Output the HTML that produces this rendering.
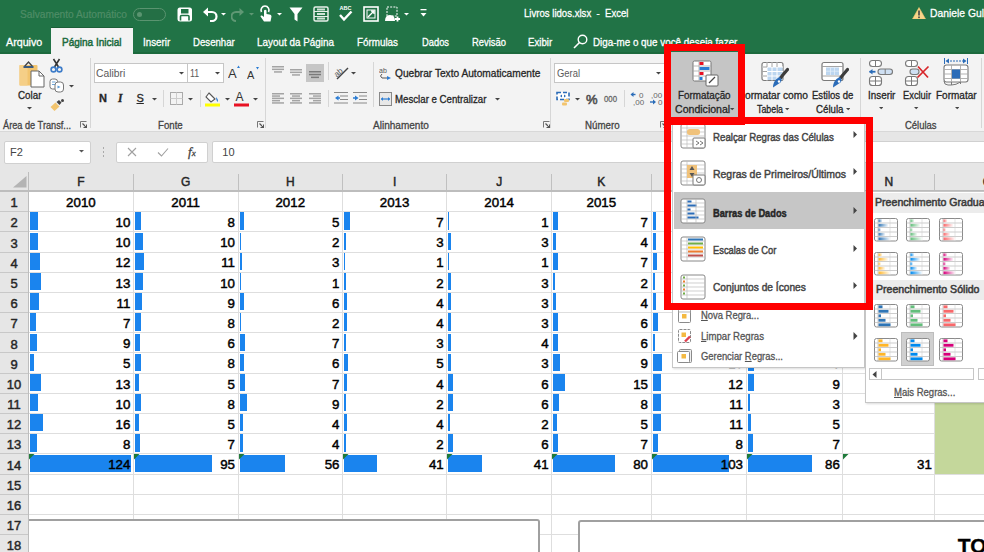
<!DOCTYPE html>
<html><head><meta charset="utf-8"><style>
html,body{margin:0;padding:0;}
body{width:984px;height:552px;overflow:hidden;position:relative;background:#fff;font-family:"Liberation Sans", sans-serif;}
div{-webkit-text-stroke:0.3px currentColor;}
</style></head><body>
<div style="position:absolute;left:0px;top:0px;width:984px;height:53.5px;background:#217346"></div>
<div style="position:absolute;left:0px;top:51.5px;width:984px;height:2px;background:#1c6a3d"></div>
<div style="position:absolute;left:20px;top:8.40px;font-size:11px;line-height:13.20px;color:#4f8d66;font-weight:normal;white-space:nowrap;transform:scaleX(0.9258);transform-origin:0 0;-webkit-text-stroke:0.2px currentColor"><span id="t1">Salvamento Automático</span></div>
<div style="position:absolute;left:132.5px;top:7.5px;width:33px;height:13.5px;border:1.3px solid #5a9470;border-radius:7px;box-sizing:border-box;background:#246f45"></div>
<div style="position:absolute;left:136.5px;top:11.8px;width:5px;height:5px;background:#5a9470;border-radius:50%"></div>
<svg style="position:absolute;left:177px;top:7px;" width="16" height="15" viewBox="0 0 16 15"><rect x="0.5" y="0.5" width="14.5" height="14" rx="2.5" fill="#fff"/><rect x="4" y="2" width="7.5" height="4.5" fill="#217346"/><path d="M3.5 13.5 V9.5 Q3.5 8.5 4.5 8.5 H11 Q12 8.5 12 9.5 V13.5" fill="none" stroke="#217346" stroke-width="1.6"/></svg>
<svg style="position:absolute;left:202px;top:6px;" width="16" height="16" viewBox="0 0 16 16"><path d="M3 6 H10 A4.5 4.5 0 0 1 10 15 H8" fill="none" stroke="#fff" stroke-width="2.2"/><path d="M1 6 L6 1.5 L6 10.5 Z" fill="#fff"/></svg>
<svg style="position:absolute;left:220.5px;top:12.75px;" width="5.0" height="3.5" viewBox="0 0 5.0 3.5"><path d="M0 0 L5.0 0 L2.5 2.5 Z" fill="#fff"/></svg>
<svg style="position:absolute;left:231px;top:6px;" width="14" height="16" viewBox="0 0 14 16"><path d="M11 6 H5 A4.5 4.5 0 0 0 5 15" fill="none" stroke="#5f9874" stroke-width="2"/><path d="M13 6 L8.5 2 L8.5 10 Z" fill="#5f9874"/></svg>
<svg style="position:absolute;left:248.5px;top:12.75px;" width="5.0" height="3.5" viewBox="0 0 5.0 3.5"><path d="M0 0 L5.0 0 L2.5 2.5 Z" fill="#5f9874"/></svg>
<svg style="position:absolute;left:258px;top:5px;" width="15" height="18" viewBox="0 0 15 18"><path d="M3.5 7 A4 4 0 1 1 10.5 7" fill="none" stroke="#fff" stroke-width="1.6"/><path d="M6 5.5 V12 L4 10.5 Q2.5 10 2.5 11.5 L6 16.5 H12.5 L13.5 11.5 Q13.5 9.5 11.5 9.5 L8.5 9 V5.5 Q7.25 4 6 5.5 Z" fill="#fff"/></svg>
<svg style="position:absolute;left:277.0px;top:12.75px;" width="5.0" height="3.5" viewBox="0 0 5.0 3.5"><path d="M0 0 L5.0 0 L2.5 2.5 Z" fill="#fff"/></svg>
<svg style="position:absolute;left:289px;top:7px;" width="14" height="15" viewBox="0 0 14 15"><path d="M0.5 0.5 H13.5 L8.5 7 V14.5 L5.5 12.5 V7 Z" fill="#fff"/></svg>
<svg style="position:absolute;left:313px;top:6px;" width="16" height="16" viewBox="0 0 16 16"><rect x="1" y="1" width="14" height="14" rx="1.5" fill="none" stroke="#e8f0ea" stroke-width="1.5"/><path d="M1 5.5 H15 M1 10.5 H15" stroke="#e8f0ea" stroke-width="1.2"/><rect x="4" y="2.5" width="8" height="2" fill="#cfe3d6"/><rect x="4" y="7" width="8" height="2" fill="#cfe3d6"/><rect x="4" y="11.5" width="8" height="2" fill="#cfe3d6"/></svg>
<svg style="position:absolute;left:338px;top:4px;" width="15" height="18" viewBox="0 0 15 18"><text x="7.5" y="6" font-size="5.5" font-family="Liberation Sans" font-weight="bold" fill="#fff" text-anchor="middle">ABC</text><path d="M2 11 L6 15.5 L13.5 7.5" fill="none" stroke="#fff" stroke-width="2.4"/></svg>
<svg style="position:absolute;left:363px;top:6px;" width="16" height="16" viewBox="0 0 16 16"><rect x="1" y="1" width="14" height="14" fill="none" stroke="#fff" stroke-width="1.6"/><rect x="4" y="4" width="8" height="8" fill="none" stroke="#fff" stroke-width="1"/><path d="M5 11 L11 5 M8 5 H11 V8" stroke="#fff" stroke-width="1.4" fill="none"/></svg>
<svg style="position:absolute;left:384px;top:6px;" width="16" height="17" viewBox="0 0 16 17"><rect x="3" y="1" width="10" height="9" fill="none" stroke="#fff" stroke-width="1" stroke-dasharray="2 1.2"/><path d="M1 15 Q1 9 6 9 Q11 9 11 15 Z" fill="#fff"/><path d="M11 13 H16 M13.5 10.5 V15.5" stroke="#fff" stroke-width="1.8"/></svg>
<svg style="position:absolute;left:404.0px;top:12.75px;" width="5.0" height="3.5" viewBox="0 0 5.0 3.5"><path d="M0 0 L5.0 0 L2.5 2.5 Z" fill="#fff"/></svg>
<svg style="position:absolute;left:420px;top:9px;" width="7" height="9" viewBox="0 0 7 9"><rect x="0.5" y="0" width="6" height="1.3" fill="#fff"/><path d="M0.5 4 L6.5 4 L3.5 7.5 Z" fill="#fff"/></svg>
<div style="position:absolute;left:523.5px;top:6.90px;font-size:11px;line-height:13.20px;color:#ffffff;font-weight:normal;white-space:nowrap;transform:scaleX(0.8722);transform-origin:0 0;"><span id="t2">Livros lidos.xlsx&nbsp; - &nbsp;Excel</span></div>
<svg style="position:absolute;left:912px;top:6.5px;" width="14" height="12.5" viewBox="0 0 14 12.5"><path d="M7 0.5 L13.5 12 H0.5 Z" fill="#f7d58a" stroke="#f4c66b" stroke-width="0.6"/><rect x="6.2" y="3.5" width="1.6" height="5" fill="#444"/><rect x="6.2" y="9.5" width="1.6" height="1.6" fill="#444"/></svg>
<div style="position:absolute;left:930px;top:7.10px;font-size:11.5px;line-height:13.80px;color:#ffffff;font-weight:normal;white-space:nowrap;transform:scaleX(0.8979);transform-origin:0 0;"><span id="t3">Daniele Gullo</span></div>
<div style="position:absolute;left:50.5px;top:27px;width:82px;height:1.5px;background:#1a5f37"></div>
<div style="position:absolute;left:50.5px;top:28.3px;width:82px;height:25.5px;background:#f3f3f3"></div>
<div style="position:absolute;left:6.4px;top:35.80px;font-size:11px;line-height:13.20px;color:#ffffff;font-weight:normal;white-space:nowrap;transform:scaleX(0.9733);transform-origin:0 0;"><span id="t4">Arquivo</span></div>
<div style="position:absolute;left:62px;top:35.80px;font-size:11px;line-height:13.20px;color:#1c6b3e;font-weight:normal;white-space:nowrap;transform:scaleX(0.9108);transform-origin:0 0;-webkit-text-stroke:0.5px currentColor"><span id="t5">Página Inicial</span></div>
<div style="position:absolute;left:143px;top:35.80px;font-size:11px;line-height:13.20px;color:#ffffff;font-weight:normal;white-space:nowrap;transform:scaleX(0.8933);transform-origin:0 0;"><span id="t6">Inserir</span></div>
<div style="position:absolute;left:193.2px;top:35.80px;font-size:11px;line-height:13.20px;color:#ffffff;font-weight:normal;white-space:nowrap;transform:scaleX(0.8763);transform-origin:0 0;"><span id="t7">Desenhar</span></div>
<div style="position:absolute;left:257px;top:35.80px;font-size:11px;line-height:13.20px;color:#ffffff;font-weight:normal;white-space:nowrap;transform:scaleX(0.8991);transform-origin:0 0;"><span id="t8">Layout da Página</span></div>
<div style="position:absolute;left:357px;top:35.80px;font-size:11px;line-height:13.20px;color:#ffffff;font-weight:normal;white-space:nowrap;transform:scaleX(0.8943);transform-origin:0 0;"><span id="t9">Fórmulas</span></div>
<div style="position:absolute;left:421.7px;top:35.80px;font-size:11px;line-height:13.20px;color:#ffffff;font-weight:normal;white-space:nowrap;transform:scaleX(0.8491);transform-origin:0 0;"><span id="t10">Dados</span></div>
<div style="position:absolute;left:471.8px;top:35.80px;font-size:11px;line-height:13.20px;color:#ffffff;font-weight:normal;white-space:nowrap;transform:scaleX(0.8528);transform-origin:0 0;"><span id="t11">Revisão</span></div>
<div style="position:absolute;left:527.8px;top:35.80px;font-size:11px;line-height:13.20px;color:#ffffff;font-weight:normal;white-space:nowrap;transform:scaleX(0.8795);transform-origin:0 0;"><span id="t12">Exibir</span></div>
<svg style="position:absolute;left:573px;top:34px;" width="15" height="15" viewBox="0 0 15 15"><circle cx="9.5" cy="5.5" r="4.3" fill="none" stroke="#fff" stroke-width="1.4"/><path d="M6.5 8.5 L1 14" stroke="#fff" stroke-width="1.6"/></svg>
<div style="position:absolute;left:592.8px;top:35.80px;font-size:11px;line-height:13.20px;color:#ffffff;font-weight:normal;white-space:nowrap;transform:scaleX(0.8945);transform-origin:0 0;"><span id="t13">Diga-me o que você deseja fazer</span></div>
<div style="position:absolute;left:0px;top:53.5px;width:984px;height:77px;background:#f3f3f3"></div>
<div style="position:absolute;left:0px;top:130.5px;width:984px;height:1.5px;background:#d8d8d8"></div>
<div style="position:absolute;left:90.2px;top:58px;width:1px;height:70px;background:#d6d6d6"></div>
<div style="position:absolute;left:264.5px;top:58px;width:1px;height:70px;background:#d6d6d6"></div>
<div style="position:absolute;left:549.7px;top:58px;width:1px;height:70px;background:#d6d6d6"></div>
<div style="position:absolute;left:860.3px;top:58px;width:1px;height:70px;background:#d6d6d6"></div>
<div style="position:absolute;left:981.3px;top:58px;width:1px;height:70px;background:#d6d6d6"></div>
<div style="position:absolute;left:3px;top:118.70px;font-size:10.5px;line-height:12.60px;color:#444444;font-weight:normal;white-space:nowrap;transform:scaleX(0.8760);transform-origin:0 0;"><span id="t14">Área de Transf...</span></div>
<div style="position:absolute;left:158.4px;top:118.70px;font-size:10.5px;line-height:12.60px;color:#444444;font-weight:normal;white-space:nowrap;transform:scaleX(0.9196);transform-origin:0 0;"><span id="t15">Fonte</span></div>
<div style="position:absolute;left:372.7px;top:118.70px;font-size:10.5px;line-height:12.60px;color:#444444;font-weight:normal;white-space:nowrap;transform:scaleX(0.9559);transform-origin:0 0;"><span id="t16">Alinhamento</span></div>
<div style="position:absolute;left:585.4px;top:118.70px;font-size:10.5px;line-height:12.60px;color:#444444;font-weight:normal;white-space:nowrap;transform:scaleX(0.9261);transform-origin:0 0;"><span id="t17">Número</span></div>
<div style="position:absolute;left:905.4px;top:118.70px;font-size:10.5px;line-height:12.60px;color:#444444;font-weight:normal;white-space:nowrap;transform:scaleX(0.9021);transform-origin:0 0;"><span id="t18">Células</span></div>
<svg style="position:absolute;left:80px;top:121px;" width="7" height="7" viewBox="0 0 7 7"><path d="M0.5 6.5 V0.5 H6.5" fill="none" stroke="#777" stroke-width="1"/><path d="M2.5 2.5 L6.5 6.5 M6.5 3.5 V6.5 H3.5" fill="none" stroke="#555" stroke-width="1.2"/></svg>
<svg style="position:absolute;left:257px;top:121px;" width="7" height="7" viewBox="0 0 7 7"><path d="M0.5 6.5 V0.5 H6.5" fill="none" stroke="#777" stroke-width="1"/><path d="M2.5 2.5 L6.5 6.5 M6.5 3.5 V6.5 H3.5" fill="none" stroke="#555" stroke-width="1.2"/></svg>
<svg style="position:absolute;left:543px;top:121px;" width="7" height="7" viewBox="0 0 7 7"><path d="M0.5 6.5 V0.5 H6.5" fill="none" stroke="#777" stroke-width="1"/><path d="M2.5 2.5 L6.5 6.5 M6.5 3.5 V6.5 H3.5" fill="none" stroke="#555" stroke-width="1.2"/></svg>
<svg style="position:absolute;left:660px;top:121px;" width="7" height="7" viewBox="0 0 7 7"><path d="M0.5 6.5 V0.5 H6.5" fill="none" stroke="#777" stroke-width="1"/><path d="M2.5 2.5 L6.5 6.5 M6.5 3.5 V6.5 H3.5" fill="none" stroke="#555" stroke-width="1.2"/></svg>
<svg style="position:absolute;left:19px;top:59.5px;" width="27" height="28" viewBox="0 0 27 28"><rect x="0.5" y="5" width="18" height="20.5" rx="1" fill="#f2c46e"/><rect x="0.5" y="5" width="8" height="20.5" fill="#f5cf87"/><path d="M5.5 6.5 L9.5 2 L13.5 6.5" fill="none" stroke="#444" stroke-width="1.3"/><rect x="4.5" y="6" width="10" height="2" fill="#3a5a80"/><path d="M12 11 H20 L25 16 V27 H12 Z" fill="#fff" stroke="#666" stroke-width="1"/><path d="M20 11 V16 H25" fill="none" stroke="#666" stroke-width="1"/></svg>
<div style="position:absolute;left:18px;top:89.00px;font-size:11px;line-height:13.20px;color:#262626;font-weight:normal;white-space:nowrap;transform:scaleX(0.8898);transform-origin:0 0;"><span id="t19">Colar</span></div>
<svg style="position:absolute;left:27.0px;top:106.75px;" width="5.0" height="3.5" viewBox="0 0 5.0 3.5"><path d="M0 0 L5.0 0 L2.5 2.5 Z" fill="#444"/></svg>
<svg style="position:absolute;left:49px;top:58px;" width="15" height="15" viewBox="0 0 15 15"><path d="M4.5 1 L9.5 9 M10.5 1 L5.5 9" stroke="#333" stroke-width="1.6"/><circle cx="4.5" cy="11.5" r="2.4" fill="none" stroke="#3d7cc9" stroke-width="1.6"/><circle cx="10.5" cy="11.5" r="2.4" fill="none" stroke="#3d7cc9" stroke-width="1.6"/></svg>
<svg style="position:absolute;left:49px;top:78px;" width="16" height="15" viewBox="0 0 16 15"><rect x="1" y="1" width="7.5" height="10" rx="2.5" fill="#fff" stroke="#777" stroke-width="1"/><path d="M3 4 H6.5 M3 6.5 H6.5" stroke="#5b9bd5" stroke-width="0.9"/><rect x="6" y="4" width="8.5" height="10" rx="3" fill="#fff" stroke="#777" stroke-width="1"/><path d="M8.5 7.5 L11.5 9 L8.5 10.5" fill="#5b9bd5"/></svg>
<svg style="position:absolute;left:68.5px;top:84.75px;" width="5.0" height="3.5" viewBox="0 0 5.0 3.5"><path d="M0 0 L5.0 0 L2.5 2.5 Z" fill="#444"/></svg>
<svg style="position:absolute;left:50px;top:98px;" width="15" height="14" viewBox="0 0 15 14"><path d="M0.5 9 L5.5 4.5 L9.5 8.5 L4.5 13 Z" fill="#f2c46e"/><path d="M6.5 4 L9 2 L11.5 4.5 L9.5 7 Z" fill="#444"/><circle cx="12.5" cy="2.5" r="1.5" fill="#444"/></svg>
<div style="position:absolute;left:94.4px;top:63.2px;width:93.3px;height:19.6px;background:#fff;border:1px solid #c6c6c6;box-sizing:border-box"></div>
<div style="position:absolute;left:187.2px;top:63.2px;width:36.5px;height:19.6px;background:#fff;border:1px solid #c6c6c6;box-sizing:border-box"></div>
<div style="position:absolute;left:96.2px;top:66.70px;font-size:10.5px;line-height:12.60px;color:#5a5a5a;font-weight:normal;white-space:nowrap;transform:scaleX(0.9844);transform-origin:0 0;-webkit-text-stroke:0"><span id="t20">Calibri</span></div>
<div style="position:absolute;left:190.4px;top:66.70px;font-size:10.5px;line-height:12.60px;color:#5a5a5a;font-weight:normal;white-space:nowrap;transform:scaleX(0.8436);transform-origin:0 0;-webkit-text-stroke:0"><span id="t21">11</span></div>
<svg style="position:absolute;left:178.8px;top:71.75px;" width="5.0" height="3.5" viewBox="0 0 5.0 3.5"><path d="M0 0 L5.0 0 L2.5 2.5 Z" fill="#444"/></svg>
<svg style="position:absolute;left:215.0px;top:71.75px;" width="5.0" height="3.5" viewBox="0 0 5.0 3.5"><path d="M0 0 L5.0 0 L2.5 2.5 Z" fill="#444"/></svg>
<svg style="position:absolute;left:228px;top:64px;" width="13" height="16" viewBox="0 0 13 16"><text x="0" y="14" font-size="13" font-family="Liberation Sans" fill="#333">A</text><path d="M9 4 L10.5 1.5 L12 4 Z" fill="#2b7cd3"/></svg>
<svg style="position:absolute;left:246.5px;top:66px;" width="13" height="14" viewBox="0 0 13 14"><text x="0" y="12.5" font-size="11" font-family="Liberation Sans" fill="#333">A</text><path d="M9 1 L10.5 3.5 L12 1 Z" fill="#2b7cd3"/></svg>
<div style="position:absolute;left:99px;top:92.40px;font-size:11px;line-height:13.20px;color:#262626;font-weight:bold;white-space:nowrap;">N</div>
<div style="position:absolute;left:118px;top:92.10px;font-size:11.5px;line-height:13.80px;color:#262626;font-weight:bold;white-space:nowrap;font-style:italic;font-family:'Liberation Serif'">I</div>
<div style="position:absolute;left:136.5px;top:91.90px;font-size:11px;line-height:13.20px;color:#262626;font-weight:normal;white-space:nowrap;text-decoration:underline">S</div>
<svg style="position:absolute;left:151.7px;top:97.75px;" width="5.0" height="3.5" viewBox="0 0 5.0 3.5"><path d="M0 0 L5.0 0 L2.5 2.5 Z" fill="#444"/></svg>
<div style="position:absolute;left:163.4px;top:90px;width:1px;height:17px;background:#d6d6d6"></div>
<svg style="position:absolute;left:170px;top:92px;" width="13" height="13" viewBox="0 0 13 13"><rect x="0.5" y="0.5" width="12" height="12" fill="none" stroke="#aaa" stroke-width="1"/><path d="M6.5 0.5 V12.5 M0.5 6.5 H12.5" stroke="#ccc" stroke-width="1"/></svg>
<svg style="position:absolute;left:187.9px;top:97.75px;" width="5.0" height="3.5" viewBox="0 0 5.0 3.5"><path d="M0 0 L5.0 0 L2.5 2.5 Z" fill="#444"/></svg>
<div style="position:absolute;left:199.6px;top:90px;width:1px;height:17px;background:#d6d6d6"></div>
<svg style="position:absolute;left:205px;top:89px;" width="16" height="18" viewBox="0 0 16 18"><path d="M4 4 L10 10 L6 13 L1 8 Z" fill="#fff" stroke="#555" stroke-width="1.1"/><path d="M11 8 Q14 11 12.5 13 Q11 11 11 8Z" fill="#2b7cd3"/><rect x="0" y="14.5" width="15" height="3" fill="#ffff00"/></svg>
<svg style="position:absolute;left:224.5px;top:97.75px;" width="5.0" height="3.5" viewBox="0 0 5.0 3.5"><path d="M0 0 L5.0 0 L2.5 2.5 Z" fill="#444"/></svg>
<svg style="position:absolute;left:233.5px;top:89px;" width="15" height="18" viewBox="0 0 15 18"><text x="1.5" y="12" font-size="12" font-family="Liberation Sans" fill="#333">A</text><rect x="0" y="14.5" width="15" height="3" fill="#e81123"/></svg>
<svg style="position:absolute;left:252.9px;top:97.75px;" width="5.0" height="3.5" viewBox="0 0 5.0 3.5"><path d="M0 0 L5.0 0 L2.5 2.5 Z" fill="#444"/></svg>
<svg style="position:absolute;left:272px;top:65.5px;" width="12" height="8.8" viewBox="0 0 12 8.8"><rect x="0.0" y="0.00" width="12" height="1.5" fill="#a4a4a4"/><rect x="0.0" y="2.60" width="12" height="1.5" fill="#a4a4a4"/><rect x="2.0" y="5.20" width="8" height="1.5" fill="#a4a4a4"/></svg>
<svg style="position:absolute;left:290px;top:69px;" width="12" height="8.8" viewBox="0 0 12 8.8"><rect x="0.0" y="0.00" width="12" height="1.5" fill="#a4a4a4"/><rect x="0.0" y="2.60" width="12" height="1.5" fill="#a4a4a4"/><rect x="2.0" y="5.20" width="8" height="1.5" fill="#a4a4a4"/></svg>
<div style="position:absolute;left:305.9px;top:64.1px;width:18px;height:18.3px;background:#c6c6c6"></div>
<svg style="position:absolute;left:309px;top:70.5px;" width="12" height="9.399999999999999" viewBox="0 0 12 9.399999999999999"><rect x="0.0" y="0.00" width="12" height="1.5" fill="#7a7a7a"/><rect x="0.0" y="2.80" width="12" height="1.5" fill="#7a7a7a"/><rect x="2.0" y="5.60" width="8" height="1.5" fill="#7a7a7a"/></svg>
<svg style="position:absolute;left:334px;top:64px;" width="15" height="16" viewBox="0 0 15 16"><text x="0" y="10" font-size="8" font-family="Liberation Sans" fill="#555" transform="rotate(-40 6 8)">ab</text><path d="M3 15 L14 4" stroke="#444" stroke-width="1.4"/></svg>
<svg style="position:absolute;left:351.0px;top:71.75px;" width="5.0" height="3.5" viewBox="0 0 5.0 3.5"><path d="M0 0 L5.0 0 L2.5 2.5 Z" fill="#444"/></svg>
<div style="position:absolute;left:327.8px;top:62px;width:1px;height:18px;background:#d6d6d6"></div>
<svg style="position:absolute;left:272px;top:93px;" width="12" height="12.5" viewBox="0 0 12 12.5"><rect x="0" y="0.00" width="12" height="1.5" fill="#a4a4a4"/><rect x="0" y="2.30" width="8" height="1.5" fill="#a4a4a4"/><rect x="0" y="4.60" width="12" height="1.5" fill="#a4a4a4"/><rect x="0" y="6.90" width="8" height="1.5" fill="#a4a4a4"/><rect x="0" y="9.20" width="12" height="1.5" fill="#a4a4a4"/></svg>
<svg style="position:absolute;left:290.4px;top:93px;" width="12" height="12.5" viewBox="0 0 12 12.5"><rect x="0.0" y="0.00" width="12" height="1.5" fill="#a4a4a4"/><rect x="2.0" y="2.30" width="8" height="1.5" fill="#a4a4a4"/><rect x="0.0" y="4.60" width="12" height="1.5" fill="#a4a4a4"/><rect x="2.0" y="6.90" width="8" height="1.5" fill="#a4a4a4"/><rect x="0.0" y="9.20" width="12" height="1.5" fill="#a4a4a4"/></svg>
<svg style="position:absolute;left:308.6px;top:93px;" width="12" height="12.5" viewBox="0 0 12 12.5"><rect x="0" y="0.00" width="12" height="1.5" fill="#a4a4a4"/><rect x="4" y="2.30" width="8" height="1.5" fill="#a4a4a4"/><rect x="0" y="4.60" width="12" height="1.5" fill="#a4a4a4"/><rect x="4" y="6.90" width="8" height="1.5" fill="#a4a4a4"/><rect x="0" y="9.20" width="12" height="1.5" fill="#a4a4a4"/></svg>
<div style="position:absolute;left:327.8px;top:90px;width:1px;height:17px;background:#d6d6d6"></div>
<svg style="position:absolute;left:334px;top:92px;" width="14" height="12" viewBox="0 0 14 12"><path d="M0 0.5 H14 M6 4 H14 M6 7.5 H14 M0 11 H14" stroke="#8a8a8a" stroke-width="1.2"/><path d="M1 6 L4.5 3.5 V8.5 Z" fill="#2b7cd3"/><path d="M3 6 H6" stroke="#2b7cd3" stroke-width="1.5"/></svg>
<svg style="position:absolute;left:352.5px;top:92px;" width="14" height="12" viewBox="0 0 14 12"><path d="M0 0.5 H14 M6 4 H14 M6 7.5 H14 M0 11 H14" stroke="#8a8a8a" stroke-width="1.2"/><path d="M5.5 6 L2 3.5 V8.5 Z" fill="#2b7cd3"/><path d="M0 6 H3" stroke="#2b7cd3" stroke-width="1.5"/></svg>
<div style="position:absolute;left:372.7px;top:62px;width:1px;height:45px;background:#d6d6d6"></div>
<svg style="position:absolute;left:379px;top:66px;" width="13" height="15" viewBox="0 0 13 15"><text x="0" y="7" font-size="7" font-family="Liberation Sans" fill="#555">ab</text><path d="M3 8 Q0 10 3 12 H8" fill="none" stroke="#555" stroke-width="1"/><path d="M8 10 L12 12 L8 14 Z" fill="#2b7cd3"/></svg>
<div style="position:absolute;left:395.2px;top:67.00px;font-size:10.5px;line-height:12.60px;color:#262626;font-weight:normal;white-space:nowrap;transform:scaleX(0.9668);transform-origin:0 0;"><span id="t25">Quebrar Texto Automaticamente</span></div>
<svg style="position:absolute;left:378.7px;top:91.5px;" width="13" height="14" viewBox="0 0 13 14"><rect x="0.5" y="0.5" width="12" height="13" fill="#e8e8e8" stroke="#888" stroke-width="1"/><path d="M2 7 H11" stroke="#2b7cd3" stroke-width="1.2"/><path d="M2 7 L4 5 V9 Z M11 7 L9 5 V9 Z" fill="#2b7cd3"/></svg>
<div style="position:absolute;left:395.2px;top:93.00px;font-size:10.5px;line-height:12.60px;color:#262626;font-weight:normal;white-space:nowrap;transform:scaleX(0.9213);transform-origin:0 0;"><span id="t26">Mesclar e Centralizar</span></div>
<svg style="position:absolute;left:494.5px;top:98.25px;" width="5.0" height="3.5" viewBox="0 0 5.0 3.5"><path d="M0 0 L5.0 0 L2.5 2.5 Z" fill="#444"/></svg>
<div style="position:absolute;left:554.3px;top:63.2px;width:120px;height:19.6px;background:#fff;border:1px solid #c6c6c6;box-sizing:border-box"></div>
<div style="position:absolute;left:557px;top:66.70px;font-size:10.5px;line-height:12.60px;color:#5a5a5a;font-weight:normal;white-space:nowrap;transform:scaleX(0.8954);transform-origin:0 0;-webkit-text-stroke:0"><span id="t27">Geral</span></div>
<svg style="position:absolute;left:656.0px;top:71.75px;" width="5.0" height="3.5" viewBox="0 0 5.0 3.5"><path d="M0 0 L5.0 0 L2.5 2.5 Z" fill="#444"/></svg>
<svg style="position:absolute;left:556px;top:90.5px;" width="16" height="16" viewBox="0 0 16 16"><path d="M1 1.5 H13 V8.5 H1 Z" fill="#fff" stroke="#2b6cb8" stroke-width="1.6" stroke-dasharray="4 2"/><path d="M4 5 L6 3.5 V6.5 Z M10 5 L8 3.5 V6.5 Z" fill="#2b6cb8"/><rect x="8" y="8" width="5" height="3" rx="1" fill="#f2c46e"/><rect x="6" y="11.5" width="5" height="3" rx="1" fill="#f2c46e"/></svg>
<svg style="position:absolute;left:574.5px;top:97.75px;" width="5.0" height="3.5" viewBox="0 0 5.0 3.5"><path d="M0 0 L5.0 0 L2.5 2.5 Z" fill="#444"/></svg>
<div style="position:absolute;left:586px;top:91.70px;font-size:13px;line-height:15.60px;color:#555;font-weight:normal;white-space:nowrap;-webkit-text-stroke:0.6px currentColor">%</div>
<div style="position:absolute;left:604.3px;top:93.30px;font-size:9.5px;line-height:11.40px;color:#666;font-weight:normal;white-space:nowrap;transform:scaleX(0.8197);transform-origin:0 0;-webkit-text-stroke:0.3px currentColor"><span id="t29">000</span></div>
<div style="position:absolute;left:623.8px;top:90px;width:1px;height:17px;background:#d6d6d6"></div>
<svg style="position:absolute;left:629.5px;top:90px;" width="16" height="16" viewBox="0 0 16 16"><path d="M1.5 4.5 H5.5" stroke="#2b6cb8" stroke-width="1.4"/><path d="M0.5 4.5 L3.5 2 V7 Z" fill="#2b6cb8"/><text x="9" y="8" font-size="8" font-family="Liberation Sans" fill="#666">0</text><text x="3" y="15" font-size="8" font-family="Liberation Sans" fill="#666">,00</text></svg>
<svg style="position:absolute;left:648.5px;top:90px;" width="16" height="16" viewBox="0 0 16 16"><text x="2" y="8" font-size="8" font-family="Liberation Sans" fill="#666">,00</text><path d="M1 12 H5" stroke="#2b6cb8" stroke-width="1.4"/><path d="M7 12 L4 9.5 V14.5 Z" fill="#2b6cb8"/><text x="9" y="15" font-size="8" font-family="Liberation Sans" fill="#666">0</text></svg>
<div style="position:absolute;left:671.4px;top:52.2px;width:67px;height:65.5px;background:#c5c5c5"></div>
<svg style="position:absolute;left:692px;top:60px;" width="28" height="28" viewBox="0 0 28 28"><rect x="1" y="1" width="18" height="20" rx="1.5" fill="#fff" stroke="#777" stroke-width="1"/><path d="M1 6 H19 M1 11 H19 M1 16 H19 M7 1 V21" stroke="#aaa" stroke-width="0.8"/><rect x="7.5" y="2" width="4" height="3" fill="#e81123"/><rect x="7.5" y="7" width="10" height="3" fill="#2b7cd3"/><rect x="7.5" y="12" width="4" height="3" fill="#e81123"/><rect x="7.5" y="17" width="3" height="3" fill="#2b7cd3"/><rect x="14" y="15" width="12" height="11" rx="1" fill="#fff" stroke="#666" stroke-width="1"/><path d="M17 23 L23 17" stroke="#444" stroke-width="1.3"/></svg>
<div style="position:absolute;left:678px;top:89.30px;font-size:10.5px;line-height:12.60px;color:#262626;font-weight:normal;white-space:nowrap;transform:scaleX(0.9388);transform-origin:0 0;"><span id="t30">Formatação</span></div>
<div style="position:absolute;left:674.5px;top:102.50px;font-size:10.5px;line-height:12.60px;color:#262626;font-weight:normal;white-space:nowrap;transform:scaleX(1.0059);transform-origin:0 0;"><span id="t31">Condicional</span></div>
<svg style="position:absolute;left:730.3px;top:107.9px;" width="4.4" height="3.2" viewBox="0 0 4.4 3.2"><path d="M0 0 L4.4 0 L2.2 2.2 Z" fill="#444"/></svg>
<svg style="position:absolute;left:761px;top:61px;" width="28" height="28" viewBox="0 0 28 28"><rect x="1" y="1.5" width="21" height="18" rx="2" fill="#fff" stroke="#7a7a7a" stroke-width="1.2"/><rect x="6" y="6" width="15.5" height="13" fill="#bcd6f0"/><path d="M1 6 H22 M1 10.5 H22 M1 15 H22 M6 1.5 V19.5 M11 1.5 V19.5 M16 1.5 V19.5" stroke="#fff" stroke-width="1"/><path d="M1 6 H6 M1 10.5 H6 M1 15 H6 M6 1.5 V6 M11 1.5 V6 M16 1.5 V6" stroke="#9a9a9a" stroke-width="0.9"/><path d="M26.5 8.5 L21 15" stroke="#3c3c3c" stroke-width="3.2" stroke-linecap="round"/><circle cx="20" cy="16.5" r="1.8" fill="#3c3c3c"/><path d="M18.5 16 Q22 18.5 19.5 21.5 L12 26.5 Q12 21 15.5 18 Z" fill="#2b6cb8"/><circle cx="18" cy="20.5" r="1.2" fill="#fff"/></svg>
<svg style="position:absolute;left:821px;top:61px;" width="28" height="28" viewBox="0 0 28 28"><rect x="1" y="1.5" width="21" height="18" rx="2" fill="#fff" stroke="#7a7a7a" stroke-width="1.2"/><path d="M1 5.5 H22 M1 15 H22" stroke="#9a9a9a" stroke-width="0.9"/><rect x="5" y="6.5" width="13" height="7.5" fill="#bcd6f0"/><path d="M5 10.2 H18 M9.5 6.5 V14 M13.5 6.5 V14" stroke="#e8f1fb" stroke-width="0.7"/><path d="M26.5 8.5 L21 15" stroke="#3c3c3c" stroke-width="3.2" stroke-linecap="round"/><circle cx="20" cy="16.5" r="1.8" fill="#3c3c3c"/><path d="M18.5 16 Q22 18.5 19.5 21.5 L12 26.5 Q12 21 15.5 18 Z" fill="#2b6cb8"/><circle cx="18" cy="20.5" r="1.2" fill="#fff"/></svg>
<div style="position:absolute;left:745px;top:89.30px;font-size:10.5px;line-height:12.60px;color:#262626;font-weight:normal;white-space:nowrap;transform:scaleX(0.9725);transform-origin:0 0;"><span id="t32">ormatar como</span></div>
<div style="position:absolute;left:756.8px;top:102.50px;font-size:10.5px;line-height:12.60px;color:#262626;font-weight:normal;white-space:nowrap;transform:scaleX(0.8400);transform-origin:0 0;"><span id="t33">Tabela</span></div>
<svg style="position:absolute;left:785.3px;top:107.9px;" width="4.4" height="3.2" viewBox="0 0 4.4 3.2"><path d="M0 0 L4.4 0 L2.2 2.2 Z" fill="#444"/></svg>
<div style="position:absolute;left:812.4px;top:89.30px;font-size:10.5px;line-height:12.60px;color:#262626;font-weight:normal;white-space:nowrap;transform:scaleX(0.9093);transform-origin:0 0;"><span id="t34">Estilos de</span></div>
<div style="position:absolute;left:815.5px;top:102.50px;font-size:10.5px;line-height:12.60px;color:#262626;font-weight:normal;white-space:nowrap;transform:scaleX(0.9234);transform-origin:0 0;"><span id="t35">Célula</span></div>
<svg style="position:absolute;left:845.8px;top:107.9px;" width="4.4" height="3.2" viewBox="0 0 4.4 3.2"><path d="M0 0 L4.4 0 L2.2 2.2 Z" fill="#444"/></svg>
<svg style="position:absolute;left:868px;top:58.5px;" width="26" height="27" viewBox="0 0 26 27"><rect x="1.5" y="1.5" width="12" height="6" rx="3" fill="#fff" stroke="#7a7a7a" stroke-width="1.1"/><path d="M7.5 1.5 V7.5" stroke="#7a7a7a" stroke-width="1"/><rect x="10" y="10" width="14.5" height="5.5" rx="2.7" fill="#cfe0f3" stroke="#7a7a7a" stroke-width="1.1"/><path d="M17.2 10 V15.5" stroke="#7a7a7a" stroke-width="1"/><path d="M1.5 12.75 H7.5" stroke="#2b6cb8" stroke-width="1.8"/><path d="M1 12.75 L4.5 10 V15.5 Z" fill="#2b6cb8"/><rect x="1.5" y="17.5" width="12" height="9" rx="3" fill="#fff" stroke="#7a7a7a" stroke-width="1.1"/><path d="M7.5 17.5 V26.5 M1.5 22 H13.5" stroke="#7a7a7a" stroke-width="1"/></svg>
<svg style="position:absolute;left:904px;top:58.5px;" width="28" height="27" viewBox="0 0 28 27"><rect x="1.5" y="1.5" width="12" height="6" rx="3" fill="#fff" stroke="#7a7a7a" stroke-width="1.1"/><path d="M7.5 1.5 V7.5" stroke="#7a7a7a" stroke-width="1"/><rect x="6" y="10" width="9" height="5.5" rx="2.7" fill="#cfe0f3" stroke="#7a7a7a" stroke-width="1.1"/><rect x="1.5" y="17.5" width="12" height="9" rx="3" fill="#fff" stroke="#7a7a7a" stroke-width="1.1"/><path d="M7.5 17.5 V26.5 M1.5 22 H13.5" stroke="#7a7a7a" stroke-width="1"/><path d="M14 7.5 L24 18.5 M24.5 7.5 L13.5 18.5" stroke="#d8262a" stroke-width="1.7"/></svg>
<svg style="position:absolute;left:942px;top:57px;" width="28" height="29" viewBox="0 0 28 29"><path d="M5 4 H23" stroke="#2b6cb8" stroke-width="1" stroke-dasharray="2 1"/><path d="M3.5 4 L7 1.5 V6.5 Z M24.5 4 L21 1.5 V6.5 Z" fill="#2b6cb8"/><path d="M2.5 1 V7 M25.5 1 V7" stroke="#2b6cb8" stroke-width="1"/><rect x="2" y="8" width="24" height="17" rx="2.5" fill="#fff" stroke="#7a7a7a" stroke-width="1.1"/><path d="M2 12.5 H26 M2 17 H26 M2 21.5 H26 M9.5 8 V25 M18.5 8 V25" stroke="#aaa" stroke-width="0.9"/><path d="M2 24 Q2 28 6 28 H9.5 M9.5 25 V28 Q14 28 18.5 25 M18.5 25 V27" stroke="#7a7a7a" stroke-width="1" fill="none"/><rect x="10" y="12.5" width="8" height="9" fill="#2b6cb8"/></svg>
<div style="position:absolute;left:868.2px;top:89.30px;font-size:10.5px;line-height:12.60px;color:#262626;font-weight:normal;white-space:nowrap;transform:scaleX(0.9388);transform-origin:0 0;"><span id="t36">Inserir</span></div>
<div style="position:absolute;left:903px;top:89.30px;font-size:10.5px;line-height:12.60px;color:#262626;font-weight:normal;white-space:nowrap;transform:scaleX(0.8884);transform-origin:0 0;"><span id="t37">Excluir</span></div>
<div style="position:absolute;left:936.2px;top:89.30px;font-size:10.5px;line-height:12.60px;color:#262626;font-weight:normal;white-space:nowrap;transform:scaleX(0.9532);transform-origin:0 0;"><span id="t38">Formatar</span></div>
<svg style="position:absolute;left:879.0999999999999px;top:107.30000000000001px;" width="4.4" height="3.2" viewBox="0 0 4.4 3.2"><path d="M0 0 L4.4 0 L2.2 2.2 Z" fill="#444"/></svg>
<svg style="position:absolute;left:914.1999999999999px;top:107.30000000000001px;" width="4.4" height="3.2" viewBox="0 0 4.4 3.2"><path d="M0 0 L4.4 0 L2.2 2.2 Z" fill="#444"/></svg>
<svg style="position:absolute;left:954.8px;top:107.30000000000001px;" width="4.4" height="3.2" viewBox="0 0 4.4 3.2"><path d="M0 0 L4.4 0 L2.2 2.2 Z" fill="#444"/></svg>
<div style="position:absolute;left:0px;top:132px;width:984px;height:40px;background:#e6e6e6"></div>
<div style="position:absolute;left:4.4px;top:140.8px;width:86.2px;height:22.8px;background:#fff;border:1px solid #d0d0d0;border-radius:2px;box-sizing:border-box"></div>
<div style="position:absolute;left:10px;top:145.60px;font-size:11px;line-height:13.20px;color:#444;font-weight:normal;white-space:nowrap;-webkit-text-stroke:0">F2</div>
<svg style="position:absolute;left:79.2px;top:150.25px;" width="5.0" height="3.5" viewBox="0 0 5.0 3.5"><path d="M0 0 L5.0 0 L2.5 2.5 Z" fill="#555"/></svg>
<div style="position:absolute;left:102.5px;top:147px;width:1.2px;height:1.5px;background:#aaa"></div>
<div style="position:absolute;left:102.5px;top:151px;width:1.2px;height:1.5px;background:#aaa"></div>
<div style="position:absolute;left:102.5px;top:155px;width:1.2px;height:1.5px;background:#aaa"></div>
<div style="position:absolute;left:115.6px;top:141.5px;width:92.4px;height:21.5px;background:#fff;border:1px solid #d0d0d0;border-radius:2px;box-sizing:border-box"></div>
<svg style="position:absolute;left:127px;top:147px;" width="10" height="10" viewBox="0 0 10 10"><path d="M1 1 L9 9 M9 1 L1 9" stroke="#a0a0a0" stroke-width="1.1"/></svg>
<svg style="position:absolute;left:156.5px;top:147px;" width="12" height="10" viewBox="0 0 12 10"><path d="M1 5.5 L4.5 9 L11 1.5" fill="none" stroke="#a0a0a0" stroke-width="1.1"/></svg>
<div style="position:absolute;left:188px;top:144px;font-family:'Liberation Serif';font-style:italic;font-size:13px;color:#444;line-height:16px">f<span style="font-size:9px">x</span></div>
<div style="position:absolute;left:211.7px;top:141px;width:800px;height:22px;background:#fff;border:1px solid #d0d0d0;border-radius:2px;box-sizing:border-box"></div>
<div style="position:absolute;left:222.3px;top:145.60px;font-size:11px;line-height:13.20px;color:#444;font-weight:normal;white-space:nowrap;-webkit-text-stroke:0">10</div>
<div style="position:absolute;left:0px;top:171.8px;width:984px;height:19.69999999999999px;background:#e6e6e6"></div>
<div style="position:absolute;left:0px;top:191.5px;width:28.5px;height:360.5px;background:#e6e6e6"></div>
<div style="position:absolute;left:28.5px;top:191.5px;width:955.5px;height:360.5px;background:#fff"></div>
<div style="position:absolute;left:28.5px;top:211.18px;width:984px;height:1px;background:#dedede"></div>
<div style="position:absolute;left:28.5px;top:231.36px;width:984px;height:1px;background:#dedede"></div>
<div style="position:absolute;left:28.5px;top:251.54px;width:984px;height:1px;background:#dedede"></div>
<div style="position:absolute;left:28.5px;top:271.72px;width:984px;height:1px;background:#dedede"></div>
<div style="position:absolute;left:28.5px;top:291.9px;width:984px;height:1px;background:#dedede"></div>
<div style="position:absolute;left:28.5px;top:312.08px;width:984px;height:1px;background:#dedede"></div>
<div style="position:absolute;left:28.5px;top:332.26px;width:984px;height:1px;background:#dedede"></div>
<div style="position:absolute;left:28.5px;top:352.44px;width:984px;height:1px;background:#dedede"></div>
<div style="position:absolute;left:28.5px;top:372.62px;width:984px;height:1px;background:#dedede"></div>
<div style="position:absolute;left:28.5px;top:392.8px;width:984px;height:1px;background:#dedede"></div>
<div style="position:absolute;left:28.5px;top:412.98px;width:984px;height:1px;background:#dedede"></div>
<div style="position:absolute;left:28.5px;top:433.15999999999997px;width:984px;height:1px;background:#dedede"></div>
<div style="position:absolute;left:28.5px;top:453.34px;width:984px;height:1px;background:#dedede"></div>
<div style="position:absolute;left:28.5px;top:473.52px;width:984px;height:1px;background:#dedede"></div>
<div style="position:absolute;left:28.5px;top:493.7px;width:984px;height:1px;background:#dedede"></div>
<div style="position:absolute;left:28.5px;top:513.88px;width:984px;height:1px;background:#dedede"></div>
<div style="position:absolute;left:28.5px;top:534.06px;width:984px;height:1px;background:#dedede"></div>
<div style="position:absolute;left:28.5px;top:554.24px;width:984px;height:1px;background:#dedede"></div>
<div style="position:absolute;left:0px;top:211.18px;width:28.5px;height:1px;background:#c8c8c8"></div>
<div style="position:absolute;left:0px;top:231.36px;width:28.5px;height:1px;background:#c8c8c8"></div>
<div style="position:absolute;left:0px;top:251.54px;width:28.5px;height:1px;background:#c8c8c8"></div>
<div style="position:absolute;left:0px;top:271.72px;width:28.5px;height:1px;background:#c8c8c8"></div>
<div style="position:absolute;left:0px;top:291.9px;width:28.5px;height:1px;background:#c8c8c8"></div>
<div style="position:absolute;left:0px;top:312.08px;width:28.5px;height:1px;background:#c8c8c8"></div>
<div style="position:absolute;left:0px;top:332.26px;width:28.5px;height:1px;background:#c8c8c8"></div>
<div style="position:absolute;left:0px;top:352.44px;width:28.5px;height:1px;background:#c8c8c8"></div>
<div style="position:absolute;left:0px;top:372.62px;width:28.5px;height:1px;background:#c8c8c8"></div>
<div style="position:absolute;left:0px;top:392.8px;width:28.5px;height:1px;background:#c8c8c8"></div>
<div style="position:absolute;left:0px;top:412.98px;width:28.5px;height:1px;background:#c8c8c8"></div>
<div style="position:absolute;left:0px;top:433.15999999999997px;width:28.5px;height:1px;background:#c8c8c8"></div>
<div style="position:absolute;left:0px;top:453.34px;width:28.5px;height:1px;background:#c8c8c8"></div>
<div style="position:absolute;left:0px;top:473.52px;width:28.5px;height:1px;background:#c8c8c8"></div>
<div style="position:absolute;left:0px;top:493.7px;width:28.5px;height:1px;background:#c8c8c8"></div>
<div style="position:absolute;left:0px;top:513.88px;width:28.5px;height:1px;background:#c8c8c8"></div>
<div style="position:absolute;left:0px;top:534.06px;width:28.5px;height:1px;background:#c8c8c8"></div>
<div style="position:absolute;left:0px;top:554.24px;width:28.5px;height:1px;background:#c8c8c8"></div>
<div style="position:absolute;left:132.8px;top:191.5px;width:1px;height:360.5px;background:#dedede"></div>
<div style="position:absolute;left:132.8px;top:173.8px;width:1px;height:17.69999999999999px;background:#c0c0c0"></div>
<div style="position:absolute;left:237.5px;top:191.5px;width:1px;height:360.5px;background:#dedede"></div>
<div style="position:absolute;left:237.5px;top:173.8px;width:1px;height:17.69999999999999px;background:#c0c0c0"></div>
<div style="position:absolute;left:342.0px;top:191.5px;width:1px;height:360.5px;background:#dedede"></div>
<div style="position:absolute;left:342.0px;top:173.8px;width:1px;height:17.69999999999999px;background:#c0c0c0"></div>
<div style="position:absolute;left:446.2px;top:191.5px;width:1px;height:360.5px;background:#dedede"></div>
<div style="position:absolute;left:446.2px;top:173.8px;width:1px;height:17.69999999999999px;background:#c0c0c0"></div>
<div style="position:absolute;left:551.1px;top:191.5px;width:1px;height:360.5px;background:#dedede"></div>
<div style="position:absolute;left:551.1px;top:173.8px;width:1px;height:17.69999999999999px;background:#c0c0c0"></div>
<div style="position:absolute;left:650.5px;top:191.5px;width:1px;height:360.5px;background:#dedede"></div>
<div style="position:absolute;left:650.5px;top:173.8px;width:1px;height:17.69999999999999px;background:#c0c0c0"></div>
<div style="position:absolute;left:745.5px;top:191.5px;width:1px;height:360.5px;background:#dedede"></div>
<div style="position:absolute;left:745.5px;top:173.8px;width:1px;height:17.69999999999999px;background:#c0c0c0"></div>
<div style="position:absolute;left:842.3px;top:191.5px;width:1px;height:360.5px;background:#dedede"></div>
<div style="position:absolute;left:842.3px;top:173.8px;width:1px;height:17.69999999999999px;background:#c0c0c0"></div>
<div style="position:absolute;left:934.3px;top:191.5px;width:1px;height:360.5px;background:#dedede"></div>
<div style="position:absolute;left:934.3px;top:173.8px;width:1px;height:17.69999999999999px;background:#c0c0c0"></div>
<div style="position:absolute;left:0px;top:190.0px;width:984px;height:1.5px;background:#bdbdbd"></div>
<div style="position:absolute;left:27.5px;top:171.8px;width:1.5px;height:380.2px;background:#bdbdbd"></div>
<svg style="position:absolute;left:12.5px;top:176px;" width="14" height="12" viewBox="0 0 14 12"><path d="M13.5 0 V11.5 H0 Z" fill="#b4b4b4"/></svg>
<div style="position:absolute;left:-119.1px;width:400px;text-align:center;top:175.10px;font-size:12px;line-height:14.40px;color:#262626;font-weight:normal;white-space:nowrap;-webkit-text-stroke:0.45px currentColor">F</div>
<div style="position:absolute;left:-14.349999999999994px;width:400px;text-align:center;top:175.10px;font-size:12px;line-height:14.40px;color:#262626;font-weight:normal;white-space:nowrap;-webkit-text-stroke:0.45px currentColor">G</div>
<div style="position:absolute;left:90.25px;width:400px;text-align:center;top:175.10px;font-size:12px;line-height:14.40px;color:#262626;font-weight:normal;white-space:nowrap;-webkit-text-stroke:0.45px currentColor">H</div>
<div style="position:absolute;left:194.60000000000002px;width:400px;text-align:center;top:175.10px;font-size:12px;line-height:14.40px;color:#262626;font-weight:normal;white-space:nowrap;-webkit-text-stroke:0.45px currentColor">I</div>
<div style="position:absolute;left:299.15px;width:400px;text-align:center;top:175.10px;font-size:12px;line-height:14.40px;color:#262626;font-weight:normal;white-space:nowrap;-webkit-text-stroke:0.45px currentColor">J</div>
<div style="position:absolute;left:401.29999999999995px;width:400px;text-align:center;top:175.10px;font-size:12px;line-height:14.40px;color:#262626;font-weight:normal;white-space:nowrap;-webkit-text-stroke:0.45px currentColor">K</div>
<div style="position:absolute;left:498.5px;width:400px;text-align:center;top:175.10px;font-size:12px;line-height:14.40px;color:#262626;font-weight:normal;white-space:nowrap;-webkit-text-stroke:0.45px currentColor">L</div>
<div style="position:absolute;left:594.4px;width:400px;text-align:center;top:175.10px;font-size:12px;line-height:14.40px;color:#262626;font-weight:normal;white-space:nowrap;-webkit-text-stroke:0.45px currentColor">M</div>
<div style="position:absolute;left:688.8px;width:400px;text-align:center;top:175.10px;font-size:12px;line-height:14.40px;color:#262626;font-weight:normal;white-space:nowrap;-webkit-text-stroke:0.45px currentColor">N</div>
<div style="position:absolute;left:787.4px;width:400px;text-align:center;top:175.10px;font-size:12px;line-height:14.40px;color:#262626;font-weight:normal;white-space:nowrap;-webkit-text-stroke:0.45px currentColor">O</div>
<div style="position:absolute;left:-186px;width:400px;text-align:center;top:195.29px;font-size:13px;line-height:15.60px;color:#262626;font-weight:normal;white-space:nowrap;-webkit-text-stroke:0.45px currentColor">1</div>
<div style="position:absolute;left:-186px;width:400px;text-align:center;top:215.47px;font-size:13px;line-height:15.60px;color:#262626;font-weight:normal;white-space:nowrap;-webkit-text-stroke:0.45px currentColor">2</div>
<div style="position:absolute;left:-186px;width:400px;text-align:center;top:235.65px;font-size:13px;line-height:15.60px;color:#262626;font-weight:normal;white-space:nowrap;-webkit-text-stroke:0.45px currentColor">3</div>
<div style="position:absolute;left:-186px;width:400px;text-align:center;top:255.83px;font-size:13px;line-height:15.60px;color:#262626;font-weight:normal;white-space:nowrap;-webkit-text-stroke:0.45px currentColor">4</div>
<div style="position:absolute;left:-186px;width:400px;text-align:center;top:276.01px;font-size:13px;line-height:15.60px;color:#262626;font-weight:normal;white-space:nowrap;-webkit-text-stroke:0.45px currentColor">5</div>
<div style="position:absolute;left:-186px;width:400px;text-align:center;top:296.19px;font-size:13px;line-height:15.60px;color:#262626;font-weight:normal;white-space:nowrap;-webkit-text-stroke:0.45px currentColor">6</div>
<div style="position:absolute;left:-186px;width:400px;text-align:center;top:316.37px;font-size:13px;line-height:15.60px;color:#262626;font-weight:normal;white-space:nowrap;-webkit-text-stroke:0.45px currentColor">7</div>
<div style="position:absolute;left:-186px;width:400px;text-align:center;top:336.55px;font-size:13px;line-height:15.60px;color:#262626;font-weight:normal;white-space:nowrap;-webkit-text-stroke:0.45px currentColor">8</div>
<div style="position:absolute;left:-186px;width:400px;text-align:center;top:356.73px;font-size:13px;line-height:15.60px;color:#262626;font-weight:normal;white-space:nowrap;-webkit-text-stroke:0.45px currentColor">9</div>
<div style="position:absolute;left:-186px;width:400px;text-align:center;top:376.91px;font-size:13px;line-height:15.60px;color:#262626;font-weight:normal;white-space:nowrap;-webkit-text-stroke:0.45px currentColor">10</div>
<div style="position:absolute;left:-186px;width:400px;text-align:center;top:397.09px;font-size:13px;line-height:15.60px;color:#262626;font-weight:normal;white-space:nowrap;-webkit-text-stroke:0.45px currentColor">11</div>
<div style="position:absolute;left:-186px;width:400px;text-align:center;top:417.27px;font-size:13px;line-height:15.60px;color:#262626;font-weight:normal;white-space:nowrap;-webkit-text-stroke:0.45px currentColor">12</div>
<div style="position:absolute;left:-186px;width:400px;text-align:center;top:437.45px;font-size:13px;line-height:15.60px;color:#262626;font-weight:normal;white-space:nowrap;-webkit-text-stroke:0.45px currentColor">13</div>
<div style="position:absolute;left:-186px;width:400px;text-align:center;top:457.63px;font-size:13px;line-height:15.60px;color:#262626;font-weight:normal;white-space:nowrap;-webkit-text-stroke:0.45px currentColor">14</div>
<div style="position:absolute;left:-186px;width:400px;text-align:center;top:477.81px;font-size:13px;line-height:15.60px;color:#262626;font-weight:normal;white-space:nowrap;-webkit-text-stroke:0.45px currentColor">15</div>
<div style="position:absolute;left:-186px;width:400px;text-align:center;top:497.99px;font-size:13px;line-height:15.60px;color:#262626;font-weight:normal;white-space:nowrap;-webkit-text-stroke:0.45px currentColor">16</div>
<div style="position:absolute;left:-186px;width:400px;text-align:center;top:518.17px;font-size:13px;line-height:15.60px;color:#262626;font-weight:normal;white-space:nowrap;-webkit-text-stroke:0.45px currentColor">17</div>
<div style="position:absolute;left:-186px;width:400px;text-align:center;top:538.35px;font-size:13px;line-height:15.60px;color:#262626;font-weight:normal;white-space:nowrap;-webkit-text-stroke:0.45px currentColor">18</div>
<div style="position:absolute;left:-119.1px;width:400px;text-align:center;top:194.81px;font-size:13.3px;line-height:15.96px;color:#000;font-weight:normal;white-space:nowrap;-webkit-text-stroke:0.45px currentColor">2010</div>
<div style="position:absolute;left:-14.349999999999994px;width:400px;text-align:center;top:194.81px;font-size:13.3px;line-height:15.96px;color:#000;font-weight:normal;white-space:nowrap;-webkit-text-stroke:0.45px currentColor">2011</div>
<div style="position:absolute;left:90.25px;width:400px;text-align:center;top:194.81px;font-size:13.3px;line-height:15.96px;color:#000;font-weight:normal;white-space:nowrap;-webkit-text-stroke:0.45px currentColor">2012</div>
<div style="position:absolute;left:194.60000000000002px;width:400px;text-align:center;top:194.81px;font-size:13.3px;line-height:15.96px;color:#000;font-weight:normal;white-space:nowrap;-webkit-text-stroke:0.45px currentColor">2013</div>
<div style="position:absolute;left:299.15px;width:400px;text-align:center;top:194.81px;font-size:13.3px;line-height:15.96px;color:#000;font-weight:normal;white-space:nowrap;-webkit-text-stroke:0.45px currentColor">2014</div>
<div style="position:absolute;left:401.29999999999995px;width:400px;text-align:center;top:194.81px;font-size:13.3px;line-height:15.96px;color:#000;font-weight:normal;white-space:nowrap;-webkit-text-stroke:0.45px currentColor">2015</div>
<div style="position:absolute;left:30.0px;top:212.48000000000002px;width:8.2px;height:17.2px;background:#1a84ee"></div>
<div style="position:absolute;right:853.7px;top:215.09px;font-size:13.3px;line-height:15.96px;color:#000;font-weight:normal;white-space:nowrap;-webkit-text-stroke:0.45px currentColor">10</div>
<div style="position:absolute;left:30.0px;top:232.66000000000003px;width:8.2px;height:17.2px;background:#1a84ee"></div>
<div style="position:absolute;right:853.7px;top:235.27px;font-size:13.3px;line-height:15.96px;color:#000;font-weight:normal;white-space:nowrap;-webkit-text-stroke:0.45px currentColor">10</div>
<div style="position:absolute;left:30.0px;top:252.84px;width:9.8px;height:17.2px;background:#1a84ee"></div>
<div style="position:absolute;right:853.7px;top:255.45px;font-size:13.3px;line-height:15.96px;color:#000;font-weight:normal;white-space:nowrap;-webkit-text-stroke:0.45px currentColor">12</div>
<div style="position:absolute;left:30.0px;top:273.02000000000004px;width:10.6px;height:17.2px;background:#1a84ee"></div>
<div style="position:absolute;right:853.7px;top:275.63px;font-size:13.3px;line-height:15.96px;color:#000;font-weight:normal;white-space:nowrap;-webkit-text-stroke:0.45px currentColor">13</div>
<div style="position:absolute;left:30.0px;top:293.2px;width:9.0px;height:17.2px;background:#1a84ee"></div>
<div style="position:absolute;right:853.7px;top:295.81px;font-size:13.3px;line-height:15.96px;color:#000;font-weight:normal;white-space:nowrap;-webkit-text-stroke:0.45px currentColor">11</div>
<div style="position:absolute;left:30.0px;top:313.38px;width:5.7px;height:17.2px;background:#1a84ee"></div>
<div style="position:absolute;right:853.7px;top:315.99px;font-size:13.3px;line-height:15.96px;color:#000;font-weight:normal;white-space:nowrap;-webkit-text-stroke:0.45px currentColor">7</div>
<div style="position:absolute;left:30.0px;top:333.56px;width:7.4px;height:17.2px;background:#1a84ee"></div>
<div style="position:absolute;right:853.7px;top:336.17px;font-size:13.3px;line-height:15.96px;color:#000;font-weight:normal;white-space:nowrap;-webkit-text-stroke:0.45px currentColor">9</div>
<div style="position:absolute;left:30.0px;top:353.74px;width:4.1px;height:17.2px;background:#1a84ee"></div>
<div style="position:absolute;right:853.7px;top:356.35px;font-size:13.3px;line-height:15.96px;color:#000;font-weight:normal;white-space:nowrap;-webkit-text-stroke:0.45px currentColor">5</div>
<div style="position:absolute;left:30.0px;top:373.92px;width:10.6px;height:17.2px;background:#1a84ee"></div>
<div style="position:absolute;right:853.7px;top:376.53px;font-size:13.3px;line-height:15.96px;color:#000;font-weight:normal;white-space:nowrap;-webkit-text-stroke:0.45px currentColor">13</div>
<div style="position:absolute;left:30.0px;top:394.1px;width:8.2px;height:17.2px;background:#1a84ee"></div>
<div style="position:absolute;right:853.7px;top:396.71px;font-size:13.3px;line-height:15.96px;color:#000;font-weight:normal;white-space:nowrap;-webkit-text-stroke:0.45px currentColor">10</div>
<div style="position:absolute;left:30.0px;top:414.28000000000003px;width:13.1px;height:17.2px;background:#1a84ee"></div>
<div style="position:absolute;right:853.7px;top:416.89px;font-size:13.3px;line-height:15.96px;color:#000;font-weight:normal;white-space:nowrap;-webkit-text-stroke:0.45px currentColor">16</div>
<div style="position:absolute;left:30.0px;top:434.46px;width:6.5px;height:17.2px;background:#1a84ee"></div>
<div style="position:absolute;right:853.7px;top:437.07px;font-size:13.3px;line-height:15.96px;color:#000;font-weight:normal;white-space:nowrap;-webkit-text-stroke:0.45px currentColor">8</div>
<div style="position:absolute;left:30.0px;top:454.64px;width:101.3px;height:17.2px;background:#1a84ee"></div>
<div style="position:absolute;right:853.7px;top:457.25px;font-size:13.3px;line-height:15.96px;color:#000;font-weight:normal;white-space:nowrap;-webkit-text-stroke:0.45px currentColor">124</div>
<div style="position:absolute;left:134.8px;top:212.48000000000002px;width:6.5px;height:17.2px;background:#1a84ee"></div>
<div style="position:absolute;right:749px;top:215.09px;font-size:13.3px;line-height:15.96px;color:#000;font-weight:normal;white-space:nowrap;-webkit-text-stroke:0.45px currentColor">8</div>
<div style="position:absolute;left:134.8px;top:232.66000000000003px;width:8.2px;height:17.2px;background:#1a84ee"></div>
<div style="position:absolute;right:749px;top:235.27px;font-size:13.3px;line-height:15.96px;color:#000;font-weight:normal;white-space:nowrap;-webkit-text-stroke:0.45px currentColor">10</div>
<div style="position:absolute;left:134.8px;top:252.84px;width:9.0px;height:17.2px;background:#1a84ee"></div>
<div style="position:absolute;right:749px;top:255.45px;font-size:13.3px;line-height:15.96px;color:#000;font-weight:normal;white-space:nowrap;-webkit-text-stroke:0.45px currentColor">11</div>
<div style="position:absolute;left:134.8px;top:273.02000000000004px;width:8.2px;height:17.2px;background:#1a84ee"></div>
<div style="position:absolute;right:749px;top:275.63px;font-size:13.3px;line-height:15.96px;color:#000;font-weight:normal;white-space:nowrap;-webkit-text-stroke:0.45px currentColor">10</div>
<div style="position:absolute;left:134.8px;top:293.2px;width:7.3px;height:17.2px;background:#1a84ee"></div>
<div style="position:absolute;right:749px;top:295.81px;font-size:13.3px;line-height:15.96px;color:#000;font-weight:normal;white-space:nowrap;-webkit-text-stroke:0.45px currentColor">9</div>
<div style="position:absolute;left:134.8px;top:313.38px;width:6.5px;height:17.2px;background:#1a84ee"></div>
<div style="position:absolute;right:749px;top:315.99px;font-size:13.3px;line-height:15.96px;color:#000;font-weight:normal;white-space:nowrap;-webkit-text-stroke:0.45px currentColor">8</div>
<div style="position:absolute;left:134.8px;top:333.56px;width:4.9px;height:17.2px;background:#1a84ee"></div>
<div style="position:absolute;right:749px;top:336.17px;font-size:13.3px;line-height:15.96px;color:#000;font-weight:normal;white-space:nowrap;-webkit-text-stroke:0.45px currentColor">6</div>
<div style="position:absolute;left:134.8px;top:353.74px;width:6.5px;height:17.2px;background:#1a84ee"></div>
<div style="position:absolute;right:749px;top:356.35px;font-size:13.3px;line-height:15.96px;color:#000;font-weight:normal;white-space:nowrap;-webkit-text-stroke:0.45px currentColor">8</div>
<div style="position:absolute;left:134.8px;top:373.92px;width:4.1px;height:17.2px;background:#1a84ee"></div>
<div style="position:absolute;right:749px;top:376.53px;font-size:13.3px;line-height:15.96px;color:#000;font-weight:normal;white-space:nowrap;-webkit-text-stroke:0.45px currentColor">5</div>
<div style="position:absolute;left:134.8px;top:394.1px;width:6.5px;height:17.2px;background:#1a84ee"></div>
<div style="position:absolute;right:749px;top:396.71px;font-size:13.3px;line-height:15.96px;color:#000;font-weight:normal;white-space:nowrap;-webkit-text-stroke:0.45px currentColor">8</div>
<div style="position:absolute;left:134.8px;top:414.28000000000003px;width:4.1px;height:17.2px;background:#1a84ee"></div>
<div style="position:absolute;right:749px;top:416.89px;font-size:13.3px;line-height:15.96px;color:#000;font-weight:normal;white-space:nowrap;-webkit-text-stroke:0.45px currentColor">5</div>
<div style="position:absolute;left:134.8px;top:434.46px;width:5.7px;height:17.2px;background:#1a84ee"></div>
<div style="position:absolute;right:749px;top:437.07px;font-size:13.3px;line-height:15.96px;color:#000;font-weight:normal;white-space:nowrap;-webkit-text-stroke:0.45px currentColor">7</div>
<div style="position:absolute;left:134.8px;top:454.64px;width:77.5px;height:17.2px;background:#1a84ee"></div>
<div style="position:absolute;right:749px;top:457.25px;font-size:13.3px;line-height:15.96px;color:#000;font-weight:normal;white-space:nowrap;-webkit-text-stroke:0.45px currentColor">95</div>
<div style="position:absolute;left:239.5px;top:212.48000000000002px;width:4.1px;height:17.2px;background:#1a84ee"></div>
<div style="position:absolute;right:644.5px;top:215.09px;font-size:13.3px;line-height:15.96px;color:#000;font-weight:normal;white-space:nowrap;-webkit-text-stroke:0.45px currentColor">5</div>
<div style="position:absolute;left:239.5px;top:232.66000000000003px;width:1.6px;height:17.2px;background:#1a84ee"></div>
<div style="position:absolute;right:644.5px;top:235.27px;font-size:13.3px;line-height:15.96px;color:#000;font-weight:normal;white-space:nowrap;-webkit-text-stroke:0.45px currentColor">2</div>
<div style="position:absolute;left:239.5px;top:252.84px;width:2.4px;height:17.2px;background:#1a84ee"></div>
<div style="position:absolute;right:644.5px;top:255.45px;font-size:13.3px;line-height:15.96px;color:#000;font-weight:normal;white-space:nowrap;-webkit-text-stroke:0.45px currentColor">3</div>
<div style="position:absolute;left:239.5px;top:273.02000000000004px;width:0.8px;height:17.2px;background:#1a84ee"></div>
<div style="position:absolute;right:644.5px;top:275.63px;font-size:13.3px;line-height:15.96px;color:#000;font-weight:normal;white-space:nowrap;-webkit-text-stroke:0.45px currentColor">1</div>
<div style="position:absolute;left:239.5px;top:293.2px;width:4.9px;height:17.2px;background:#1a84ee"></div>
<div style="position:absolute;right:644.5px;top:295.81px;font-size:13.3px;line-height:15.96px;color:#000;font-weight:normal;white-space:nowrap;-webkit-text-stroke:0.45px currentColor">6</div>
<div style="position:absolute;left:239.5px;top:313.38px;width:1.6px;height:17.2px;background:#1a84ee"></div>
<div style="position:absolute;right:644.5px;top:315.99px;font-size:13.3px;line-height:15.96px;color:#000;font-weight:normal;white-space:nowrap;-webkit-text-stroke:0.45px currentColor">2</div>
<div style="position:absolute;left:239.5px;top:333.56px;width:5.7px;height:17.2px;background:#1a84ee"></div>
<div style="position:absolute;right:644.5px;top:336.17px;font-size:13.3px;line-height:15.96px;color:#000;font-weight:normal;white-space:nowrap;-webkit-text-stroke:0.45px currentColor">7</div>
<div style="position:absolute;left:239.5px;top:353.74px;width:4.9px;height:17.2px;background:#1a84ee"></div>
<div style="position:absolute;right:644.5px;top:356.35px;font-size:13.3px;line-height:15.96px;color:#000;font-weight:normal;white-space:nowrap;-webkit-text-stroke:0.45px currentColor">6</div>
<div style="position:absolute;left:239.5px;top:373.92px;width:5.7px;height:17.2px;background:#1a84ee"></div>
<div style="position:absolute;right:644.5px;top:376.53px;font-size:13.3px;line-height:15.96px;color:#000;font-weight:normal;white-space:nowrap;-webkit-text-stroke:0.45px currentColor">7</div>
<div style="position:absolute;left:239.5px;top:394.1px;width:7.3px;height:17.2px;background:#1a84ee"></div>
<div style="position:absolute;right:644.5px;top:396.71px;font-size:13.3px;line-height:15.96px;color:#000;font-weight:normal;white-space:nowrap;-webkit-text-stroke:0.45px currentColor">9</div>
<div style="position:absolute;left:239.5px;top:414.28000000000003px;width:3.3px;height:17.2px;background:#1a84ee"></div>
<div style="position:absolute;right:644.5px;top:416.89px;font-size:13.3px;line-height:15.96px;color:#000;font-weight:normal;white-space:nowrap;-webkit-text-stroke:0.45px currentColor">4</div>
<div style="position:absolute;left:239.5px;top:434.46px;width:3.3px;height:17.2px;background:#1a84ee"></div>
<div style="position:absolute;right:644.5px;top:437.07px;font-size:13.3px;line-height:15.96px;color:#000;font-weight:normal;white-space:nowrap;-webkit-text-stroke:0.45px currentColor">4</div>
<div style="position:absolute;left:239.5px;top:454.64px;width:45.6px;height:17.2px;background:#1a84ee"></div>
<div style="position:absolute;right:644.5px;top:457.25px;font-size:13.3px;line-height:15.96px;color:#000;font-weight:normal;white-space:nowrap;-webkit-text-stroke:0.45px currentColor">56</div>
<div style="position:absolute;left:344.0px;top:212.48000000000002px;width:5.7px;height:17.2px;background:#1a84ee"></div>
<div style="position:absolute;right:540.3px;top:215.09px;font-size:13.3px;line-height:15.96px;color:#000;font-weight:normal;white-space:nowrap;-webkit-text-stroke:0.45px currentColor">7</div>
<div style="position:absolute;left:344.0px;top:232.66000000000003px;width:2.4px;height:17.2px;background:#1a84ee"></div>
<div style="position:absolute;right:540.3px;top:235.27px;font-size:13.3px;line-height:15.96px;color:#000;font-weight:normal;white-space:nowrap;-webkit-text-stroke:0.45px currentColor">3</div>
<div style="position:absolute;left:344.0px;top:252.84px;width:0.8px;height:17.2px;background:#1a84ee"></div>
<div style="position:absolute;right:540.3px;top:255.45px;font-size:13.3px;line-height:15.96px;color:#000;font-weight:normal;white-space:nowrap;-webkit-text-stroke:0.45px currentColor">1</div>
<div style="position:absolute;left:344.0px;top:273.02000000000004px;width:1.6px;height:17.2px;background:#1a84ee"></div>
<div style="position:absolute;right:540.3px;top:275.63px;font-size:13.3px;line-height:15.96px;color:#000;font-weight:normal;white-space:nowrap;-webkit-text-stroke:0.45px currentColor">2</div>
<div style="position:absolute;left:344.0px;top:293.2px;width:3.2px;height:17.2px;background:#1a84ee"></div>
<div style="position:absolute;right:540.3px;top:295.81px;font-size:13.3px;line-height:15.96px;color:#000;font-weight:normal;white-space:nowrap;-webkit-text-stroke:0.45px currentColor">4</div>
<div style="position:absolute;left:344.0px;top:313.38px;width:3.2px;height:17.2px;background:#1a84ee"></div>
<div style="position:absolute;right:540.3px;top:315.99px;font-size:13.3px;line-height:15.96px;color:#000;font-weight:normal;white-space:nowrap;-webkit-text-stroke:0.45px currentColor">4</div>
<div style="position:absolute;left:344.0px;top:333.56px;width:2.4px;height:17.2px;background:#1a84ee"></div>
<div style="position:absolute;right:540.3px;top:336.17px;font-size:13.3px;line-height:15.96px;color:#000;font-weight:normal;white-space:nowrap;-webkit-text-stroke:0.45px currentColor">3</div>
<div style="position:absolute;left:344.0px;top:353.74px;width:4.1px;height:17.2px;background:#1a84ee"></div>
<div style="position:absolute;right:540.3px;top:356.35px;font-size:13.3px;line-height:15.96px;color:#000;font-weight:normal;white-space:nowrap;-webkit-text-stroke:0.45px currentColor">5</div>
<div style="position:absolute;left:344.0px;top:373.92px;width:3.2px;height:17.2px;background:#1a84ee"></div>
<div style="position:absolute;right:540.3px;top:376.53px;font-size:13.3px;line-height:15.96px;color:#000;font-weight:normal;white-space:nowrap;-webkit-text-stroke:0.45px currentColor">4</div>
<div style="position:absolute;left:344.0px;top:394.1px;width:1.6px;height:17.2px;background:#1a84ee"></div>
<div style="position:absolute;right:540.3px;top:396.71px;font-size:13.3px;line-height:15.96px;color:#000;font-weight:normal;white-space:nowrap;-webkit-text-stroke:0.45px currentColor">2</div>
<div style="position:absolute;left:344.0px;top:414.28000000000003px;width:3.2px;height:17.2px;background:#1a84ee"></div>
<div style="position:absolute;right:540.3px;top:416.89px;font-size:13.3px;line-height:15.96px;color:#000;font-weight:normal;white-space:nowrap;-webkit-text-stroke:0.45px currentColor">4</div>
<div style="position:absolute;left:344.0px;top:434.46px;width:1.6px;height:17.2px;background:#1a84ee"></div>
<div style="position:absolute;right:540.3px;top:437.07px;font-size:13.3px;line-height:15.96px;color:#000;font-weight:normal;white-space:nowrap;-webkit-text-stroke:0.45px currentColor">2</div>
<div style="position:absolute;left:344.0px;top:454.64px;width:33.3px;height:17.2px;background:#1a84ee"></div>
<div style="position:absolute;right:540.3px;top:457.25px;font-size:13.3px;line-height:15.96px;color:#000;font-weight:normal;white-space:nowrap;-webkit-text-stroke:0.45px currentColor">41</div>
<div style="position:absolute;left:448.2px;top:212.48000000000002px;width:0.8px;height:17.2px;background:#1a84ee"></div>
<div style="position:absolute;right:435.4px;top:215.09px;font-size:13.3px;line-height:15.96px;color:#000;font-weight:normal;white-space:nowrap;-webkit-text-stroke:0.45px currentColor">1</div>
<div style="position:absolute;left:448.2px;top:232.66000000000003px;width:2.5px;height:17.2px;background:#1a84ee"></div>
<div style="position:absolute;right:435.4px;top:235.27px;font-size:13.3px;line-height:15.96px;color:#000;font-weight:normal;white-space:nowrap;-webkit-text-stroke:0.45px currentColor">3</div>
<div style="position:absolute;left:448.2px;top:252.84px;width:0.8px;height:17.2px;background:#1a84ee"></div>
<div style="position:absolute;right:435.4px;top:255.45px;font-size:13.3px;line-height:15.96px;color:#000;font-weight:normal;white-space:nowrap;-webkit-text-stroke:0.45px currentColor">1</div>
<div style="position:absolute;left:448.2px;top:273.02000000000004px;width:2.5px;height:17.2px;background:#1a84ee"></div>
<div style="position:absolute;right:435.4px;top:275.63px;font-size:13.3px;line-height:15.96px;color:#000;font-weight:normal;white-space:nowrap;-webkit-text-stroke:0.45px currentColor">3</div>
<div style="position:absolute;left:448.2px;top:293.2px;width:2.5px;height:17.2px;background:#1a84ee"></div>
<div style="position:absolute;right:435.4px;top:295.81px;font-size:13.3px;line-height:15.96px;color:#000;font-weight:normal;white-space:nowrap;-webkit-text-stroke:0.45px currentColor">3</div>
<div style="position:absolute;left:448.2px;top:313.38px;width:2.5px;height:17.2px;background:#1a84ee"></div>
<div style="position:absolute;right:435.4px;top:315.99px;font-size:13.3px;line-height:15.96px;color:#000;font-weight:normal;white-space:nowrap;-webkit-text-stroke:0.45px currentColor">3</div>
<div style="position:absolute;left:448.2px;top:333.56px;width:3.3px;height:17.2px;background:#1a84ee"></div>
<div style="position:absolute;right:435.4px;top:336.17px;font-size:13.3px;line-height:15.96px;color:#000;font-weight:normal;white-space:nowrap;-webkit-text-stroke:0.45px currentColor">4</div>
<div style="position:absolute;left:448.2px;top:353.74px;width:2.5px;height:17.2px;background:#1a84ee"></div>
<div style="position:absolute;right:435.4px;top:356.35px;font-size:13.3px;line-height:15.96px;color:#000;font-weight:normal;white-space:nowrap;-webkit-text-stroke:0.45px currentColor">3</div>
<div style="position:absolute;left:448.2px;top:373.92px;width:4.9px;height:17.2px;background:#1a84ee"></div>
<div style="position:absolute;right:435.4px;top:376.53px;font-size:13.3px;line-height:15.96px;color:#000;font-weight:normal;white-space:nowrap;-webkit-text-stroke:0.45px currentColor">6</div>
<div style="position:absolute;left:448.2px;top:394.1px;width:4.9px;height:17.2px;background:#1a84ee"></div>
<div style="position:absolute;right:435.4px;top:396.71px;font-size:13.3px;line-height:15.96px;color:#000;font-weight:normal;white-space:nowrap;-webkit-text-stroke:0.45px currentColor">6</div>
<div style="position:absolute;left:448.2px;top:414.28000000000003px;width:1.6px;height:17.2px;background:#1a84ee"></div>
<div style="position:absolute;right:435.4px;top:416.89px;font-size:13.3px;line-height:15.96px;color:#000;font-weight:normal;white-space:nowrap;-webkit-text-stroke:0.45px currentColor">2</div>
<div style="position:absolute;left:448.2px;top:434.46px;width:4.9px;height:17.2px;background:#1a84ee"></div>
<div style="position:absolute;right:435.4px;top:437.07px;font-size:13.3px;line-height:15.96px;color:#000;font-weight:normal;white-space:nowrap;-webkit-text-stroke:0.45px currentColor">6</div>
<div style="position:absolute;left:448.2px;top:454.64px;width:33.5px;height:17.2px;background:#1a84ee"></div>
<div style="position:absolute;right:435.4px;top:457.25px;font-size:13.3px;line-height:15.96px;color:#000;font-weight:normal;white-space:nowrap;-webkit-text-stroke:0.45px currentColor">41</div>
<div style="position:absolute;left:553.1px;top:212.48000000000002px;width:5.4px;height:17.2px;background:#1a84ee"></div>
<div style="position:absolute;right:336px;top:215.09px;font-size:13.3px;line-height:15.96px;color:#000;font-weight:normal;white-space:nowrap;-webkit-text-stroke:0.45px currentColor">7</div>
<div style="position:absolute;left:553.1px;top:232.66000000000003px;width:3.1px;height:17.2px;background:#1a84ee"></div>
<div style="position:absolute;right:336px;top:235.27px;font-size:13.3px;line-height:15.96px;color:#000;font-weight:normal;white-space:nowrap;-webkit-text-stroke:0.45px currentColor">4</div>
<div style="position:absolute;left:553.1px;top:252.84px;width:5.4px;height:17.2px;background:#1a84ee"></div>
<div style="position:absolute;right:336px;top:255.45px;font-size:13.3px;line-height:15.96px;color:#000;font-weight:normal;white-space:nowrap;-webkit-text-stroke:0.45px currentColor">7</div>
<div style="position:absolute;left:553.1px;top:273.02000000000004px;width:1.5px;height:17.2px;background:#1a84ee"></div>
<div style="position:absolute;right:336px;top:275.63px;font-size:13.3px;line-height:15.96px;color:#000;font-weight:normal;white-space:nowrap;-webkit-text-stroke:0.45px currentColor">2</div>
<div style="position:absolute;left:553.1px;top:293.2px;width:3.1px;height:17.2px;background:#1a84ee"></div>
<div style="position:absolute;right:336px;top:295.81px;font-size:13.3px;line-height:15.96px;color:#000;font-weight:normal;white-space:nowrap;-webkit-text-stroke:0.45px currentColor">4</div>
<div style="position:absolute;left:553.1px;top:313.38px;width:4.6px;height:17.2px;background:#1a84ee"></div>
<div style="position:absolute;right:336px;top:315.99px;font-size:13.3px;line-height:15.96px;color:#000;font-weight:normal;white-space:nowrap;-webkit-text-stroke:0.45px currentColor">6</div>
<div style="position:absolute;left:553.1px;top:333.56px;width:4.6px;height:17.2px;background:#1a84ee"></div>
<div style="position:absolute;right:336px;top:336.17px;font-size:13.3px;line-height:15.96px;color:#000;font-weight:normal;white-space:nowrap;-webkit-text-stroke:0.45px currentColor">6</div>
<div style="position:absolute;left:553.1px;top:353.74px;width:7.0px;height:17.2px;background:#1a84ee"></div>
<div style="position:absolute;right:336px;top:356.35px;font-size:13.3px;line-height:15.96px;color:#000;font-weight:normal;white-space:nowrap;-webkit-text-stroke:0.45px currentColor">9</div>
<div style="position:absolute;left:553.1px;top:373.92px;width:11.6px;height:17.2px;background:#1a84ee"></div>
<div style="position:absolute;right:336px;top:376.53px;font-size:13.3px;line-height:15.96px;color:#000;font-weight:normal;white-space:nowrap;-webkit-text-stroke:0.45px currentColor">15</div>
<div style="position:absolute;left:553.1px;top:394.1px;width:6.2px;height:17.2px;background:#1a84ee"></div>
<div style="position:absolute;right:336px;top:396.71px;font-size:13.3px;line-height:15.96px;color:#000;font-weight:normal;white-space:nowrap;-webkit-text-stroke:0.45px currentColor">8</div>
<div style="position:absolute;left:553.1px;top:414.28000000000003px;width:3.9px;height:17.2px;background:#1a84ee"></div>
<div style="position:absolute;right:336px;top:416.89px;font-size:13.3px;line-height:15.96px;color:#000;font-weight:normal;white-space:nowrap;-webkit-text-stroke:0.45px currentColor">5</div>
<div style="position:absolute;left:553.1px;top:434.46px;width:5.4px;height:17.2px;background:#1a84ee"></div>
<div style="position:absolute;right:336px;top:437.07px;font-size:13.3px;line-height:15.96px;color:#000;font-weight:normal;white-space:nowrap;-webkit-text-stroke:0.45px currentColor">7</div>
<div style="position:absolute;left:553.1px;top:454.64px;width:61.9px;height:17.2px;background:#1a84ee"></div>
<div style="position:absolute;right:336px;top:457.25px;font-size:13.3px;line-height:15.96px;color:#000;font-weight:normal;white-space:nowrap;-webkit-text-stroke:0.45px currentColor">80</div>
<div style="position:absolute;left:652.5px;top:212.48000000000002px;width:3.7px;height:17.2px;background:#1a84ee"></div>
<div style="position:absolute;right:241px;top:215.09px;font-size:13.3px;line-height:15.96px;color:#000;font-weight:normal;white-space:nowrap;-webkit-text-stroke:0.45px currentColor">5</div>
<div style="position:absolute;left:652.5px;top:232.66000000000003px;width:3.0px;height:17.2px;background:#1a84ee"></div>
<div style="position:absolute;right:241px;top:235.27px;font-size:13.3px;line-height:15.96px;color:#000;font-weight:normal;white-space:nowrap;-webkit-text-stroke:0.45px currentColor">4</div>
<div style="position:absolute;left:652.5px;top:252.84px;width:4.4px;height:17.2px;background:#1a84ee"></div>
<div style="position:absolute;right:241px;top:255.45px;font-size:13.3px;line-height:15.96px;color:#000;font-weight:normal;white-space:nowrap;-webkit-text-stroke:0.45px currentColor">6</div>
<div style="position:absolute;left:652.5px;top:273.02000000000004px;width:2.2px;height:17.2px;background:#1a84ee"></div>
<div style="position:absolute;right:241px;top:275.63px;font-size:13.3px;line-height:15.96px;color:#000;font-weight:normal;white-space:nowrap;-webkit-text-stroke:0.45px currentColor">3</div>
<div style="position:absolute;left:652.5px;top:293.2px;width:3.0px;height:17.2px;background:#1a84ee"></div>
<div style="position:absolute;right:241px;top:295.81px;font-size:13.3px;line-height:15.96px;color:#000;font-weight:normal;white-space:nowrap;-webkit-text-stroke:0.45px currentColor">4</div>
<div style="position:absolute;left:652.5px;top:313.38px;width:5.2px;height:17.2px;background:#1a84ee"></div>
<div style="position:absolute;right:241px;top:315.99px;font-size:13.3px;line-height:15.96px;color:#000;font-weight:normal;white-space:nowrap;-webkit-text-stroke:0.45px currentColor">7</div>
<div style="position:absolute;left:652.5px;top:333.56px;width:2.2px;height:17.2px;background:#1a84ee"></div>
<div style="position:absolute;right:241px;top:336.17px;font-size:13.3px;line-height:15.96px;color:#000;font-weight:normal;white-space:nowrap;-webkit-text-stroke:0.45px currentColor">3</div>
<div style="position:absolute;left:652.5px;top:353.74px;width:9.6px;height:17.2px;background:#1a84ee"></div>
<div style="position:absolute;right:241px;top:356.35px;font-size:13.3px;line-height:15.96px;color:#000;font-weight:normal;white-space:nowrap;-webkit-text-stroke:0.45px currentColor">13</div>
<div style="position:absolute;left:652.5px;top:373.92px;width:8.9px;height:17.2px;background:#1a84ee"></div>
<div style="position:absolute;right:241px;top:376.53px;font-size:13.3px;line-height:15.96px;color:#000;font-weight:normal;white-space:nowrap;-webkit-text-stroke:0.45px currentColor">12</div>
<div style="position:absolute;left:652.5px;top:394.1px;width:8.1px;height:17.2px;background:#1a84ee"></div>
<div style="position:absolute;right:241px;top:396.71px;font-size:13.3px;line-height:15.96px;color:#000;font-weight:normal;white-space:nowrap;-webkit-text-stroke:0.45px currentColor">11</div>
<div style="position:absolute;left:652.5px;top:414.28000000000003px;width:8.1px;height:17.2px;background:#1a84ee"></div>
<div style="position:absolute;right:241px;top:416.89px;font-size:13.3px;line-height:15.96px;color:#000;font-weight:normal;white-space:nowrap;-webkit-text-stroke:0.45px currentColor">11</div>
<div style="position:absolute;left:652.5px;top:434.46px;width:5.9px;height:17.2px;background:#1a84ee"></div>
<div style="position:absolute;right:241px;top:437.07px;font-size:13.3px;line-height:15.96px;color:#000;font-weight:normal;white-space:nowrap;-webkit-text-stroke:0.45px currentColor">8</div>
<div style="position:absolute;left:652.5px;top:454.64px;width:76.0px;height:17.2px;background:#1a84ee"></div>
<div style="position:absolute;right:241px;top:457.25px;font-size:13.3px;line-height:15.96px;color:#000;font-weight:normal;white-space:nowrap;-webkit-text-stroke:0.45px currentColor">103</div>
<div style="position:absolute;left:747.5px;top:212.48000000000002px;width:6.8px;height:17.2px;background:#1a84ee"></div>
<div style="position:absolute;right:144.20000000000005px;top:215.09px;font-size:13.3px;line-height:15.96px;color:#000;font-weight:normal;white-space:nowrap;-webkit-text-stroke:0.45px currentColor">9</div>
<div style="position:absolute;left:747.5px;top:232.66000000000003px;width:6.8px;height:17.2px;background:#1a84ee"></div>
<div style="position:absolute;right:144.20000000000005px;top:235.27px;font-size:13.3px;line-height:15.96px;color:#000;font-weight:normal;white-space:nowrap;-webkit-text-stroke:0.45px currentColor">9</div>
<div style="position:absolute;left:747.5px;top:252.84px;width:6.8px;height:17.2px;background:#1a84ee"></div>
<div style="position:absolute;right:144.20000000000005px;top:255.45px;font-size:13.3px;line-height:15.96px;color:#000;font-weight:normal;white-space:nowrap;-webkit-text-stroke:0.45px currentColor">9</div>
<div style="position:absolute;left:747.5px;top:273.02000000000004px;width:6.8px;height:17.2px;background:#1a84ee"></div>
<div style="position:absolute;right:144.20000000000005px;top:275.63px;font-size:13.3px;line-height:15.96px;color:#000;font-weight:normal;white-space:nowrap;-webkit-text-stroke:0.45px currentColor">9</div>
<div style="position:absolute;left:747.5px;top:293.2px;width:6.8px;height:17.2px;background:#1a84ee"></div>
<div style="position:absolute;right:144.20000000000005px;top:295.81px;font-size:13.3px;line-height:15.96px;color:#000;font-weight:normal;white-space:nowrap;-webkit-text-stroke:0.45px currentColor">9</div>
<div style="position:absolute;left:747.5px;top:313.38px;width:6.8px;height:17.2px;background:#1a84ee"></div>
<div style="position:absolute;right:144.20000000000005px;top:315.99px;font-size:13.3px;line-height:15.96px;color:#000;font-weight:normal;white-space:nowrap;-webkit-text-stroke:0.45px currentColor">9</div>
<div style="position:absolute;left:747.5px;top:333.56px;width:6.8px;height:17.2px;background:#1a84ee"></div>
<div style="position:absolute;right:144.20000000000005px;top:336.17px;font-size:13.3px;line-height:15.96px;color:#000;font-weight:normal;white-space:nowrap;-webkit-text-stroke:0.45px currentColor">9</div>
<div style="position:absolute;left:747.5px;top:353.74px;width:6.8px;height:17.2px;background:#1a84ee"></div>
<div style="position:absolute;right:144.20000000000005px;top:356.35px;font-size:13.3px;line-height:15.96px;color:#000;font-weight:normal;white-space:nowrap;-webkit-text-stroke:0.45px currentColor">9</div>
<div style="position:absolute;left:747.5px;top:373.92px;width:6.8px;height:17.2px;background:#1a84ee"></div>
<div style="position:absolute;right:144.20000000000005px;top:376.53px;font-size:13.3px;line-height:15.96px;color:#000;font-weight:normal;white-space:nowrap;-webkit-text-stroke:0.45px currentColor">9</div>
<div style="position:absolute;left:747.5px;top:394.1px;width:2.3px;height:17.2px;background:#1a84ee"></div>
<div style="position:absolute;right:144.20000000000005px;top:396.71px;font-size:13.3px;line-height:15.96px;color:#000;font-weight:normal;white-space:nowrap;-webkit-text-stroke:0.45px currentColor">3</div>
<div style="position:absolute;left:747.5px;top:414.28000000000003px;width:3.8px;height:17.2px;background:#1a84ee"></div>
<div style="position:absolute;right:144.20000000000005px;top:416.89px;font-size:13.3px;line-height:15.96px;color:#000;font-weight:normal;white-space:nowrap;-webkit-text-stroke:0.45px currentColor">5</div>
<div style="position:absolute;left:747.5px;top:434.46px;width:5.3px;height:17.2px;background:#1a84ee"></div>
<div style="position:absolute;right:144.20000000000005px;top:437.07px;font-size:13.3px;line-height:15.96px;color:#000;font-weight:normal;white-space:nowrap;-webkit-text-stroke:0.45px currentColor">7</div>
<div style="position:absolute;left:747.5px;top:454.64px;width:64.7px;height:17.2px;background:#1a84ee"></div>
<div style="position:absolute;right:144.20000000000005px;top:457.25px;font-size:13.3px;line-height:15.96px;color:#000;font-weight:normal;white-space:nowrap;-webkit-text-stroke:0.45px currentColor">86</div>
<div style="position:absolute;right:52.200000000000045px;top:457.25px;font-size:13.3px;line-height:15.96px;color:#000;font-weight:normal;white-space:nowrap;-webkit-text-stroke:0.45px currentColor">31</div>
<svg style="position:absolute;left:29.0px;top:454.34px;" width="6" height="6" viewBox="0 0 6 6"><path d="M0 0 H5.5 L0 5.5 Z" fill="#1e7a3a"/></svg>
<svg style="position:absolute;left:133.8px;top:454.34px;" width="6" height="6" viewBox="0 0 6 6"><path d="M0 0 H5.5 L0 5.5 Z" fill="#1e7a3a"/></svg>
<svg style="position:absolute;left:238.5px;top:454.34px;" width="6" height="6" viewBox="0 0 6 6"><path d="M0 0 H5.5 L0 5.5 Z" fill="#1e7a3a"/></svg>
<svg style="position:absolute;left:343.0px;top:454.34px;" width="6" height="6" viewBox="0 0 6 6"><path d="M0 0 H5.5 L0 5.5 Z" fill="#1e7a3a"/></svg>
<svg style="position:absolute;left:447.2px;top:454.34px;" width="6" height="6" viewBox="0 0 6 6"><path d="M0 0 H5.5 L0 5.5 Z" fill="#1e7a3a"/></svg>
<svg style="position:absolute;left:552.1px;top:454.34px;" width="6" height="6" viewBox="0 0 6 6"><path d="M0 0 H5.5 L0 5.5 Z" fill="#1e7a3a"/></svg>
<svg style="position:absolute;left:651.5px;top:454.34px;" width="6" height="6" viewBox="0 0 6 6"><path d="M0 0 H5.5 L0 5.5 Z" fill="#1e7a3a"/></svg>
<svg style="position:absolute;left:746.5px;top:454.34px;" width="6" height="6" viewBox="0 0 6 6"><path d="M0 0 H5.5 L0 5.5 Z" fill="#1e7a3a"/></svg>
<svg style="position:absolute;left:843.3px;top:454.34px;" width="6" height="6" viewBox="0 0 6 6"><path d="M0 0 H5.5 L0 5.5 Z" fill="#1e7a3a"/></svg>
<div style="position:absolute;left:935.3px;top:360px;width:60px;height:113.51999999999998px;background:#c4d79b"></div>
<div style="position:absolute;left:29px;top:519px;width:511px;height:60px;border:2px solid #a0a0a0;border-left:none;border-radius:0 3px 0 0;background:#fff;box-sizing:border-box"></div>
<div style="position:absolute;left:577.5px;top:520px;width:450px;height:60px;border:2px solid #a0a0a0;border-radius:3px;background:#fff;box-sizing:border-box"></div>
<div style="position:absolute;left:957.7px;top:533.20px;font-size:21px;line-height:25.20px;color:#000;font-weight:bold;white-space:nowrap;">TO</div>
<div style="position:absolute;left:672.3px;top:117px;width:193px;height:250.5px;background:#fff;border:1px solid #c6c6c6;box-sizing:border-box;box-shadow:1px 1px 2px rgba(0,0,0,0.15)"></div>
<div style="position:absolute;left:673.5px;top:192.2px;width:191px;height:37.2px;background:#c6c6c6"></div>
<div style="position:absolute;left:712.5px;top:131.10px;font-size:11px;line-height:13.20px;color:#444;font-weight:normal;white-space:nowrap;transform:scaleX(0.8821);transform-origin:0 0;-webkit-text-stroke:0.45px currentColor"><span id="t181">Realçar Regras das Células</span></div>
<svg style="position:absolute;left:853px;top:131.2px;" width="5" height="8" viewBox="0 0 5 8"><path d="M0.5 0 L4 3.5 L0.5 7 Z" fill="#444"/></svg>
<div style="position:absolute;left:712.5px;top:168.10px;font-size:11px;line-height:13.20px;color:#444;font-weight:normal;white-space:nowrap;transform:scaleX(0.9501);transform-origin:0 0;-webkit-text-stroke:0.45px currentColor"><span id="t182">Regras de Primeiros/Últimos</span></div>
<svg style="position:absolute;left:853px;top:168.2px;" width="5" height="8" viewBox="0 0 5 8"><path d="M0.5 0 L4 3.5 L0.5 7 Z" fill="#444"/></svg>
<div style="position:absolute;left:712.5px;top:206.90px;font-size:11px;line-height:13.20px;color:#262626;font-weight:bold;white-space:nowrap;transform:scaleX(0.8440);transform-origin:0 0;-webkit-text-stroke:0.45px currentColor"><span id="t183">Barras de Dados</span></div>
<svg style="position:absolute;left:853px;top:207.0px;" width="5" height="8" viewBox="0 0 5 8"><path d="M0.5 0 L4 3.5 L0.5 7 Z" fill="#444"/></svg>
<div style="position:absolute;left:712.5px;top:244.40px;font-size:11px;line-height:13.20px;color:#444;font-weight:normal;white-space:nowrap;transform:scaleX(0.8486);transform-origin:0 0;-webkit-text-stroke:0.45px currentColor"><span id="t184">Escalas de Cor</span></div>
<svg style="position:absolute;left:853px;top:244.5px;" width="5" height="8" viewBox="0 0 5 8"><path d="M0.5 0 L4 3.5 L0.5 7 Z" fill="#444"/></svg>
<div style="position:absolute;left:712.5px;top:281.40px;font-size:11px;line-height:13.20px;color:#444;font-weight:normal;white-space:nowrap;transform:scaleX(0.9253);transform-origin:0 0;-webkit-text-stroke:0.45px currentColor"><span id="t185">Conjuntos de Ícones</span></div>
<svg style="position:absolute;left:853px;top:281.5px;" width="5" height="8" viewBox="0 0 5 8"><path d="M0.5 0 L4 3.5 L0.5 7 Z" fill="#444"/></svg>
<svg style="position:absolute;left:680px;top:123px;" width="27" height="27" viewBox="0 0 27 27"><rect x="1" y="1" width="24" height="24" rx="2" fill="#fff" stroke="#888" stroke-width="1"/><path d="M1 5 H25" stroke="#bbb" stroke-width="0.7"/><path d="M1 9 H25" stroke="#bbb" stroke-width="0.7"/><path d="M1 13 H25" stroke="#bbb" stroke-width="0.7"/><path d="M1 17 H25" stroke="#bbb" stroke-width="0.7"/><path d="M1 21 H25" stroke="#bbb" stroke-width="0.7"/><path d="M7 1 V25" stroke="#bbb" stroke-width="0.7"/><rect x="7" y="6" width="13" height="6" rx="2.5" fill="#f0c27b"/><rect x="13" y="15" width="12" height="10" rx="1" fill="#fff" stroke="#777" stroke-width="1"/><path d="M16 18 L19 20 L16 22 M20 18 L23 20 L20 22" stroke="#555" fill="none" stroke-width="0.8"/></svg>
<svg style="position:absolute;left:680px;top:159.5px;" width="27" height="27" viewBox="0 0 27 27"><rect x="1" y="1" width="24" height="24" rx="2" fill="#fff" stroke="#888" stroke-width="1"/><path d="M1 5 H25" stroke="#bbb" stroke-width="0.7"/><path d="M1 9 H25" stroke="#bbb" stroke-width="0.7"/><path d="M1 13 H25" stroke="#bbb" stroke-width="0.7"/><path d="M1 17 H25" stroke="#bbb" stroke-width="0.7"/><path d="M1 21 H25" stroke="#bbb" stroke-width="0.7"/><path d="M7 1 V25" stroke="#bbb" stroke-width="0.7"/><rect x="7" y="5" width="10" height="13" fill="#f0c27b"/><path d="M12 6 L9.5 10 H14.5 Z M12 17 L9.5 13 H14.5 Z" fill="#555"/><rect x="13" y="15" width="12" height="10" rx="1" fill="#fff" stroke="#777" stroke-width="1"/><circle cx="19" cy="20" r="2.5" fill="none" stroke="#555" stroke-width="0.8"/></svg>
<svg style="position:absolute;left:680px;top:198px;" width="27" height="27" viewBox="0 0 27 27"><rect x="1" y="1" width="24" height="24" rx="2" fill="#fff" stroke="#888" stroke-width="1"/><path d="M1 5 H25" stroke="#bbb" stroke-width="0.7"/><path d="M1 9 H25" stroke="#bbb" stroke-width="0.7"/><path d="M1 13 H25" stroke="#bbb" stroke-width="0.7"/><path d="M1 17 H25" stroke="#bbb" stroke-width="0.7"/><path d="M1 21 H25" stroke="#bbb" stroke-width="0.7"/><path d="M7 1 V25" stroke="#bbb" stroke-width="0.7"/><rect x="7.5" y="2.5" width="4" height="2" fill="#2b6cb8"/><rect x="7.5" y="6.5" width="9" height="2" fill="#2b6cb8"/><rect x="7.5" y="10.5" width="3" height="2" fill="#2b6cb8"/><rect x="7.5" y="14.5" width="7" height="2" fill="#2b6cb8"/><rect x="7.5" y="18.5" width="11" height="2" fill="#2b6cb8"/><path d="M16 1 V25" stroke="#bbb" stroke-width="0.7"/></svg>
<svg style="position:absolute;left:680px;top:236px;" width="27" height="27" viewBox="0 0 27 27"><rect x="1" y="1" width="24" height="24" rx="2" fill="#fff" stroke="#888" stroke-width="1"/><path d="M1 5 H25" stroke="#bbb" stroke-width="0.7"/><path d="M1 9 H25" stroke="#bbb" stroke-width="0.7"/><path d="M1 13 H25" stroke="#bbb" stroke-width="0.7"/><path d="M1 17 H25" stroke="#bbb" stroke-width="0.7"/><path d="M1 21 H25" stroke="#bbb" stroke-width="0.7"/><path d="M7 1 V25" stroke="#bbb" stroke-width="0.7"/><rect x="8" y="2.5" width="15" height="2" fill="#2e75b6"/><rect x="8" y="6.5" width="15" height="2" fill="#70ad47"/><rect x="8" y="10.5" width="15" height="2" fill="#ffc000"/><rect x="8" y="14.5" width="15" height="2" fill="#ed7d31"/><rect x="8" y="18.5" width="15" height="2" fill="#c0504d"/></svg>
<svg style="position:absolute;left:680px;top:273.5px;" width="27" height="27" viewBox="0 0 27 27"><rect x="1" y="1" width="24" height="24" rx="2" fill="#fff" stroke="#888" stroke-width="1"/><path d="M1 5 H25" stroke="#bbb" stroke-width="0.7"/><path d="M1 9 H25" stroke="#bbb" stroke-width="0.7"/><path d="M1 13 H25" stroke="#bbb" stroke-width="0.7"/><path d="M1 17 H25" stroke="#bbb" stroke-width="0.7"/><path d="M1 21 H25" stroke="#bbb" stroke-width="0.7"/><path d="M7 1 V25" stroke="#bbb" stroke-width="0.7"/><rect x="3" y="2.5" width="2" height="2" fill="#70ad47"/><rect x="3" y="6.5" width="2" height="2" fill="#ed7d31"/><rect x="3" y="10.5" width="2" height="2" fill="#70ad47"/><rect x="3" y="14.5" width="2" height="2" fill="#ed7d31"/><rect x="3" y="18.5" width="2" height="2" fill="#70ad47"/></svg>
<div style="position:absolute;left:701.4px;top:309.30px;font-size:10.5px;line-height:12.60px;color:#555;font-weight:normal;white-space:nowrap;transform:scaleX(0.8966);transform-origin:0 0;"><span id="t186"><u>N</u>ova Regra...</span></div>
<div style="position:absolute;left:701.4px;top:329.50px;font-size:10.5px;line-height:12.60px;color:#555;font-weight:normal;white-space:nowrap;transform:scaleX(0.9147);transform-origin:0 0;"><span id="t187"><u>L</u>impar Regras</span></div>
<svg style="position:absolute;left:853px;top:331.8px;" width="5" height="8" viewBox="0 0 5 8"><path d="M0.5 0 L4.5 4 L0.5 8 Z" fill="#444"/></svg>
<div style="position:absolute;left:701.4px;top:349.60px;font-size:10.5px;line-height:12.60px;color:#555;font-weight:normal;white-space:nowrap;transform:scaleX(0.8946);transform-origin:0 0;"><span id="t188">Gerenciar <u>R</u>egras...</span></div>
<svg style="position:absolute;left:677.5px;top:308.6px;" width="14" height="14" viewBox="0 0 14 14"><rect x="0.5" y="0.5" width="12" height="13" rx="1" fill="#fff" stroke="#8a8a8a" stroke-width="1"/><path d="M0.5 3 H12.5" stroke="#bbb" stroke-width="1"/><rect x="4" y="5" width="4.5" height="4.5" fill="#f4b942"/></svg>
<svg style="position:absolute;left:677.5px;top:328.8px;" width="14" height="14" viewBox="0 0 14 14"><rect x="0.5" y="0.5" width="12" height="13" rx="1" fill="#fff" stroke="#8a8a8a" stroke-width="1" stroke-dasharray="3 1"/><rect x="3.5" y="3.5" width="4.5" height="4.5" fill="#f4b942"/><path d="M7 12.5 L12 7.5" stroke="#e04050" stroke-width="2.4"/></svg>
<svg style="position:absolute;left:676.5px;top:348.9px;" width="15" height="14" viewBox="0 0 15 14"><rect x="2.5" y="0.5" width="12" height="13" rx="1" fill="#f0f0f0" stroke="#8a8a8a" stroke-width="1"/><rect x="0.5" y="2.5" width="12" height="11" rx="1" fill="#fff" stroke="#8a8a8a" stroke-width="1"/><rect x="4.5" y="5" width="4.5" height="4.5" fill="#f4b942"/></svg>
<div style="position:absolute;left:865.4px;top:191px;width:130px;height:212px;background:#fff;border:1px solid #c6c6c6;box-sizing:border-box;box-shadow:1px 1px 2px rgba(0,0,0,0.15)"></div>
<div style="position:absolute;left:866.4px;top:193px;width:120px;height:19.6px;background:#ececec"></div>
<div style="position:absolute;left:875.3px;top:196.40px;font-size:11px;line-height:13.20px;color:#3c3c3c;font-weight:normal;white-space:nowrap;transform:scaleX(0.9640);transform-origin:0 0;-webkit-text-stroke:0.55px currentColor"><span id="t189">Preenchimento Gradual</span></div>
<div style="position:absolute;left:866.4px;top:280px;width:120px;height:20px;background:#ececec"></div>
<div style="position:absolute;left:875.5px;top:282.90px;font-size:11px;line-height:13.20px;color:#3c3c3c;font-weight:normal;white-space:nowrap;transform:scaleX(0.9617);transform-origin:0 0;-webkit-text-stroke:0.55px currentColor"><span id="t190">Preenchimento Sólido</span></div>
<svg style="position:absolute;left:873.5px;top:218px;" width="24" height="24" viewBox="0 0 24 24"><defs><linearGradient id="g2e75b6"><stop offset="0" stop-color="#2e75b6"/><stop offset="1" stop-color="#fff"/></linearGradient></defs><rect x="0.5" y="0.5" width="23" height="22.5" rx="2" fill="#fff" stroke="#8a8a8a" stroke-width="1"/><path d="M0.5 5.0 H23.5" stroke="#b8b8b8" stroke-width="0.7"/><path d="M0.5 9.5 H23.5" stroke="#b8b8b8" stroke-width="0.7"/><path d="M0.5 14.0 H23.5" stroke="#b8b8b8" stroke-width="0.7"/><path d="M0.5 18.5 H23.5" stroke="#b8b8b8" stroke-width="0.7"/><path d="M4 0.5 V23" stroke="#b8b8b8" stroke-width="0.7"/><path d="M16 0.5 V23" stroke="#d0d0d0" stroke-width="0.6"/><rect x="4.5" y="1.4" width="4" height="2.8" fill="url(#g2e75b6)"/><rect x="4.5" y="5.9" width="10" height="2.8" fill="url(#g2e75b6)"/><rect x="4.5" y="10.4" width="2.5" height="2.8" fill="url(#g2e75b6)"/><rect x="4.5" y="14.9" width="7" height="2.8" fill="url(#g2e75b6)"/><rect x="4.5" y="19.4" width="12" height="2.8" fill="url(#g2e75b6)"/></svg>
<svg style="position:absolute;left:905.5px;top:218px;" width="24" height="24" viewBox="0 0 24 24"><defs><linearGradient id="g63be7b"><stop offset="0" stop-color="#63be7b"/><stop offset="1" stop-color="#fff"/></linearGradient></defs><rect x="0.5" y="0.5" width="23" height="22.5" rx="2" fill="#fff" stroke="#8a8a8a" stroke-width="1"/><path d="M0.5 5.0 H23.5" stroke="#b8b8b8" stroke-width="0.7"/><path d="M0.5 9.5 H23.5" stroke="#b8b8b8" stroke-width="0.7"/><path d="M0.5 14.0 H23.5" stroke="#b8b8b8" stroke-width="0.7"/><path d="M0.5 18.5 H23.5" stroke="#b8b8b8" stroke-width="0.7"/><path d="M4 0.5 V23" stroke="#b8b8b8" stroke-width="0.7"/><path d="M16 0.5 V23" stroke="#d0d0d0" stroke-width="0.6"/><rect x="4.5" y="1.4" width="4" height="2.8" fill="url(#g63be7b)"/><rect x="4.5" y="5.9" width="10" height="2.8" fill="url(#g63be7b)"/><rect x="4.5" y="10.4" width="2.5" height="2.8" fill="url(#g63be7b)"/><rect x="4.5" y="14.9" width="7" height="2.8" fill="url(#g63be7b)"/><rect x="4.5" y="19.4" width="12" height="2.8" fill="url(#g63be7b)"/></svg>
<svg style="position:absolute;left:939px;top:218px;" width="24" height="24" viewBox="0 0 24 24"><defs><linearGradient id="gf8696b"><stop offset="0" stop-color="#f8696b"/><stop offset="1" stop-color="#fff"/></linearGradient></defs><rect x="0.5" y="0.5" width="23" height="22.5" rx="2" fill="#fff" stroke="#8a8a8a" stroke-width="1"/><path d="M0.5 5.0 H23.5" stroke="#b8b8b8" stroke-width="0.7"/><path d="M0.5 9.5 H23.5" stroke="#b8b8b8" stroke-width="0.7"/><path d="M0.5 14.0 H23.5" stroke="#b8b8b8" stroke-width="0.7"/><path d="M0.5 18.5 H23.5" stroke="#b8b8b8" stroke-width="0.7"/><path d="M4 0.5 V23" stroke="#b8b8b8" stroke-width="0.7"/><path d="M16 0.5 V23" stroke="#d0d0d0" stroke-width="0.6"/><rect x="4.5" y="1.4" width="4" height="2.8" fill="url(#gf8696b)"/><rect x="4.5" y="5.9" width="10" height="2.8" fill="url(#gf8696b)"/><rect x="4.5" y="10.4" width="2.5" height="2.8" fill="url(#gf8696b)"/><rect x="4.5" y="14.9" width="7" height="2.8" fill="url(#gf8696b)"/><rect x="4.5" y="19.4" width="12" height="2.8" fill="url(#gf8696b)"/></svg>
<svg style="position:absolute;left:873.5px;top:251.5px;" width="24" height="24" viewBox="0 0 24 24"><defs><linearGradient id="gffb628"><stop offset="0" stop-color="#ffb628"/><stop offset="1" stop-color="#fff"/></linearGradient></defs><rect x="0.5" y="0.5" width="23" height="22.5" rx="2" fill="#fff" stroke="#8a8a8a" stroke-width="1"/><path d="M0.5 5.0 H23.5" stroke="#b8b8b8" stroke-width="0.7"/><path d="M0.5 9.5 H23.5" stroke="#b8b8b8" stroke-width="0.7"/><path d="M0.5 14.0 H23.5" stroke="#b8b8b8" stroke-width="0.7"/><path d="M0.5 18.5 H23.5" stroke="#b8b8b8" stroke-width="0.7"/><path d="M4 0.5 V23" stroke="#b8b8b8" stroke-width="0.7"/><path d="M16 0.5 V23" stroke="#d0d0d0" stroke-width="0.6"/><rect x="4.5" y="1.4" width="4" height="2.8" fill="url(#gffb628)"/><rect x="4.5" y="5.9" width="10" height="2.8" fill="url(#gffb628)"/><rect x="4.5" y="10.4" width="2.5" height="2.8" fill="url(#gffb628)"/><rect x="4.5" y="14.9" width="7" height="2.8" fill="url(#gffb628)"/><rect x="4.5" y="19.4" width="12" height="2.8" fill="url(#gffb628)"/></svg>
<svg style="position:absolute;left:905.5px;top:251.5px;" width="24" height="24" viewBox="0 0 24 24"><defs><linearGradient id="g008aef"><stop offset="0" stop-color="#008aef"/><stop offset="1" stop-color="#fff"/></linearGradient></defs><rect x="0.5" y="0.5" width="23" height="22.5" rx="2" fill="#fff" stroke="#8a8a8a" stroke-width="1"/><path d="M0.5 5.0 H23.5" stroke="#b8b8b8" stroke-width="0.7"/><path d="M0.5 9.5 H23.5" stroke="#b8b8b8" stroke-width="0.7"/><path d="M0.5 14.0 H23.5" stroke="#b8b8b8" stroke-width="0.7"/><path d="M0.5 18.5 H23.5" stroke="#b8b8b8" stroke-width="0.7"/><path d="M4 0.5 V23" stroke="#b8b8b8" stroke-width="0.7"/><path d="M16 0.5 V23" stroke="#d0d0d0" stroke-width="0.6"/><rect x="4.5" y="1.4" width="4" height="2.8" fill="url(#g008aef)"/><rect x="4.5" y="5.9" width="10" height="2.8" fill="url(#g008aef)"/><rect x="4.5" y="10.4" width="2.5" height="2.8" fill="url(#g008aef)"/><rect x="4.5" y="14.9" width="7" height="2.8" fill="url(#g008aef)"/><rect x="4.5" y="19.4" width="12" height="2.8" fill="url(#g008aef)"/></svg>
<svg style="position:absolute;left:939px;top:251.5px;" width="24" height="24" viewBox="0 0 24 24"><defs><linearGradient id="gd6007b"><stop offset="0" stop-color="#d6007b"/><stop offset="1" stop-color="#fff"/></linearGradient></defs><rect x="0.5" y="0.5" width="23" height="22.5" rx="2" fill="#fff" stroke="#8a8a8a" stroke-width="1"/><path d="M0.5 5.0 H23.5" stroke="#b8b8b8" stroke-width="0.7"/><path d="M0.5 9.5 H23.5" stroke="#b8b8b8" stroke-width="0.7"/><path d="M0.5 14.0 H23.5" stroke="#b8b8b8" stroke-width="0.7"/><path d="M0.5 18.5 H23.5" stroke="#b8b8b8" stroke-width="0.7"/><path d="M4 0.5 V23" stroke="#b8b8b8" stroke-width="0.7"/><path d="M16 0.5 V23" stroke="#d0d0d0" stroke-width="0.6"/><rect x="4.5" y="1.4" width="4" height="2.8" fill="url(#gd6007b)"/><rect x="4.5" y="5.9" width="10" height="2.8" fill="url(#gd6007b)"/><rect x="4.5" y="10.4" width="2.5" height="2.8" fill="url(#gd6007b)"/><rect x="4.5" y="14.9" width="7" height="2.8" fill="url(#gd6007b)"/><rect x="4.5" y="19.4" width="12" height="2.8" fill="url(#gd6007b)"/></svg>
<svg style="position:absolute;left:873.5px;top:303.5px;" width="24" height="24" viewBox="0 0 24 24"><rect x="0.5" y="0.5" width="23" height="22.5" rx="2" fill="#fff" stroke="#8a8a8a" stroke-width="1"/><path d="M0.5 5.0 H23.5" stroke="#b8b8b8" stroke-width="0.7"/><path d="M0.5 9.5 H23.5" stroke="#b8b8b8" stroke-width="0.7"/><path d="M0.5 14.0 H23.5" stroke="#b8b8b8" stroke-width="0.7"/><path d="M0.5 18.5 H23.5" stroke="#b8b8b8" stroke-width="0.7"/><path d="M4 0.5 V23" stroke="#b8b8b8" stroke-width="0.7"/><path d="M16 0.5 V23" stroke="#d0d0d0" stroke-width="0.6"/><rect x="4.5" y="1.4" width="4" height="2.8" fill="#2e75b6"/><rect x="4.5" y="5.9" width="10" height="2.8" fill="#2e75b6"/><rect x="4.5" y="10.4" width="2.5" height="2.8" fill="#2e75b6"/><rect x="4.5" y="14.9" width="7" height="2.8" fill="#2e75b6"/><rect x="4.5" y="19.4" width="12" height="2.8" fill="#2e75b6"/></svg>
<svg style="position:absolute;left:905.5px;top:303.5px;" width="24" height="24" viewBox="0 0 24 24"><rect x="0.5" y="0.5" width="23" height="22.5" rx="2" fill="#fff" stroke="#8a8a8a" stroke-width="1"/><path d="M0.5 5.0 H23.5" stroke="#b8b8b8" stroke-width="0.7"/><path d="M0.5 9.5 H23.5" stroke="#b8b8b8" stroke-width="0.7"/><path d="M0.5 14.0 H23.5" stroke="#b8b8b8" stroke-width="0.7"/><path d="M0.5 18.5 H23.5" stroke="#b8b8b8" stroke-width="0.7"/><path d="M4 0.5 V23" stroke="#b8b8b8" stroke-width="0.7"/><path d="M16 0.5 V23" stroke="#d0d0d0" stroke-width="0.6"/><rect x="4.5" y="1.4" width="4" height="2.8" fill="#63be7b"/><rect x="4.5" y="5.9" width="10" height="2.8" fill="#63be7b"/><rect x="4.5" y="10.4" width="2.5" height="2.8" fill="#63be7b"/><rect x="4.5" y="14.9" width="7" height="2.8" fill="#63be7b"/><rect x="4.5" y="19.4" width="12" height="2.8" fill="#63be7b"/></svg>
<svg style="position:absolute;left:939px;top:303.5px;" width="24" height="24" viewBox="0 0 24 24"><rect x="0.5" y="0.5" width="23" height="22.5" rx="2" fill="#fff" stroke="#8a8a8a" stroke-width="1"/><path d="M0.5 5.0 H23.5" stroke="#b8b8b8" stroke-width="0.7"/><path d="M0.5 9.5 H23.5" stroke="#b8b8b8" stroke-width="0.7"/><path d="M0.5 14.0 H23.5" stroke="#b8b8b8" stroke-width="0.7"/><path d="M0.5 18.5 H23.5" stroke="#b8b8b8" stroke-width="0.7"/><path d="M4 0.5 V23" stroke="#b8b8b8" stroke-width="0.7"/><path d="M16 0.5 V23" stroke="#d0d0d0" stroke-width="0.6"/><rect x="4.5" y="1.4" width="4" height="2.8" fill="#f8696b"/><rect x="4.5" y="5.9" width="10" height="2.8" fill="#f8696b"/><rect x="4.5" y="10.4" width="2.5" height="2.8" fill="#f8696b"/><rect x="4.5" y="14.9" width="7" height="2.8" fill="#f8696b"/><rect x="4.5" y="19.4" width="12" height="2.8" fill="#f8696b"/></svg>
<div style="position:absolute;left:901px;top:332.4px;width:33px;height:33.4px;background:#d0d0d0;border:1px solid #bdbdbd;box-sizing:border-box"></div>
<svg style="position:absolute;left:873.5px;top:337.5px;" width="24" height="24" viewBox="0 0 24 24"><rect x="0.5" y="0.5" width="23" height="22.5" rx="2" fill="#fff" stroke="#8a8a8a" stroke-width="1"/><path d="M0.5 5.0 H23.5" stroke="#b8b8b8" stroke-width="0.7"/><path d="M0.5 9.5 H23.5" stroke="#b8b8b8" stroke-width="0.7"/><path d="M0.5 14.0 H23.5" stroke="#b8b8b8" stroke-width="0.7"/><path d="M0.5 18.5 H23.5" stroke="#b8b8b8" stroke-width="0.7"/><path d="M4 0.5 V23" stroke="#b8b8b8" stroke-width="0.7"/><path d="M16 0.5 V23" stroke="#d0d0d0" stroke-width="0.6"/><rect x="4.5" y="1.4" width="4" height="2.8" fill="#ffb628"/><rect x="4.5" y="5.9" width="10" height="2.8" fill="#ffb628"/><rect x="4.5" y="10.4" width="2.5" height="2.8" fill="#ffb628"/><rect x="4.5" y="14.9" width="7" height="2.8" fill="#ffb628"/><rect x="4.5" y="19.4" width="12" height="2.8" fill="#ffb628"/></svg>
<svg style="position:absolute;left:905.5px;top:337.5px;" width="24" height="24" viewBox="0 0 24 24"><rect x="0.5" y="0.5" width="23" height="22.5" rx="2" fill="#fff" stroke="#8a8a8a" stroke-width="1"/><path d="M0.5 5.0 H23.5" stroke="#b8b8b8" stroke-width="0.7"/><path d="M0.5 9.5 H23.5" stroke="#b8b8b8" stroke-width="0.7"/><path d="M0.5 14.0 H23.5" stroke="#b8b8b8" stroke-width="0.7"/><path d="M0.5 18.5 H23.5" stroke="#b8b8b8" stroke-width="0.7"/><path d="M4 0.5 V23" stroke="#b8b8b8" stroke-width="0.7"/><path d="M16 0.5 V23" stroke="#d0d0d0" stroke-width="0.6"/><rect x="4.5" y="1.4" width="4" height="2.8" fill="#008aef"/><rect x="4.5" y="5.9" width="10" height="2.8" fill="#008aef"/><rect x="4.5" y="10.4" width="2.5" height="2.8" fill="#008aef"/><rect x="4.5" y="14.9" width="7" height="2.8" fill="#008aef"/><rect x="4.5" y="19.4" width="12" height="2.8" fill="#008aef"/></svg>
<svg style="position:absolute;left:939px;top:337.5px;" width="24" height="24" viewBox="0 0 24 24"><rect x="0.5" y="0.5" width="23" height="22.5" rx="2" fill="#fff" stroke="#8a8a8a" stroke-width="1"/><path d="M0.5 5.0 H23.5" stroke="#b8b8b8" stroke-width="0.7"/><path d="M0.5 9.5 H23.5" stroke="#b8b8b8" stroke-width="0.7"/><path d="M0.5 14.0 H23.5" stroke="#b8b8b8" stroke-width="0.7"/><path d="M0.5 18.5 H23.5" stroke="#b8b8b8" stroke-width="0.7"/><path d="M4 0.5 V23" stroke="#b8b8b8" stroke-width="0.7"/><path d="M16 0.5 V23" stroke="#d0d0d0" stroke-width="0.6"/><rect x="4.5" y="1.4" width="4" height="2.8" fill="#d6007b"/><rect x="4.5" y="5.9" width="10" height="2.8" fill="#d6007b"/><rect x="4.5" y="10.4" width="2.5" height="2.8" fill="#d6007b"/><rect x="4.5" y="14.9" width="7" height="2.8" fill="#d6007b"/><rect x="4.5" y="19.4" width="12" height="2.8" fill="#d6007b"/></svg>
<div style="position:absolute;left:869px;top:367.7px;width:105px;height:12px;background:#fff;border:1px solid #c6c6c6;box-sizing:border-box"></div>
<div style="position:absolute;left:881px;top:367.7px;width:1px;height:12px;background:#c6c6c6"></div>
<svg style="position:absolute;left:872px;top:370.5px;" width="5" height="7" viewBox="0 0 5 7"><path d="M4.5 0 L0.5 3.5 L4.5 7 Z" fill="#444"/></svg>
<div style="position:absolute;left:978px;top:367.7px;width:12px;height:12px;background:#fff;border:1px solid #c6c6c6;box-sizing:border-box"></div>
<div style="position:absolute;left:894px;top:386.10px;font-size:10.5px;line-height:12.60px;color:#555;font-weight:normal;white-space:nowrap;transform:scaleX(0.9054);transform-origin:0 0;"><span id="t191"><u>M</u>ais Regras...</span></div>
<div style="position:absolute;left:664px;top:43.7px;width:81px;height:81px;border:7.5px solid #ff0000;box-sizing:border-box"></div>
<div style="position:absolute;left:664px;top:117.2px;width:209px;height:192.5px;border:7.5px solid #ff0000;box-sizing:border-box"></div>
</body></html>
